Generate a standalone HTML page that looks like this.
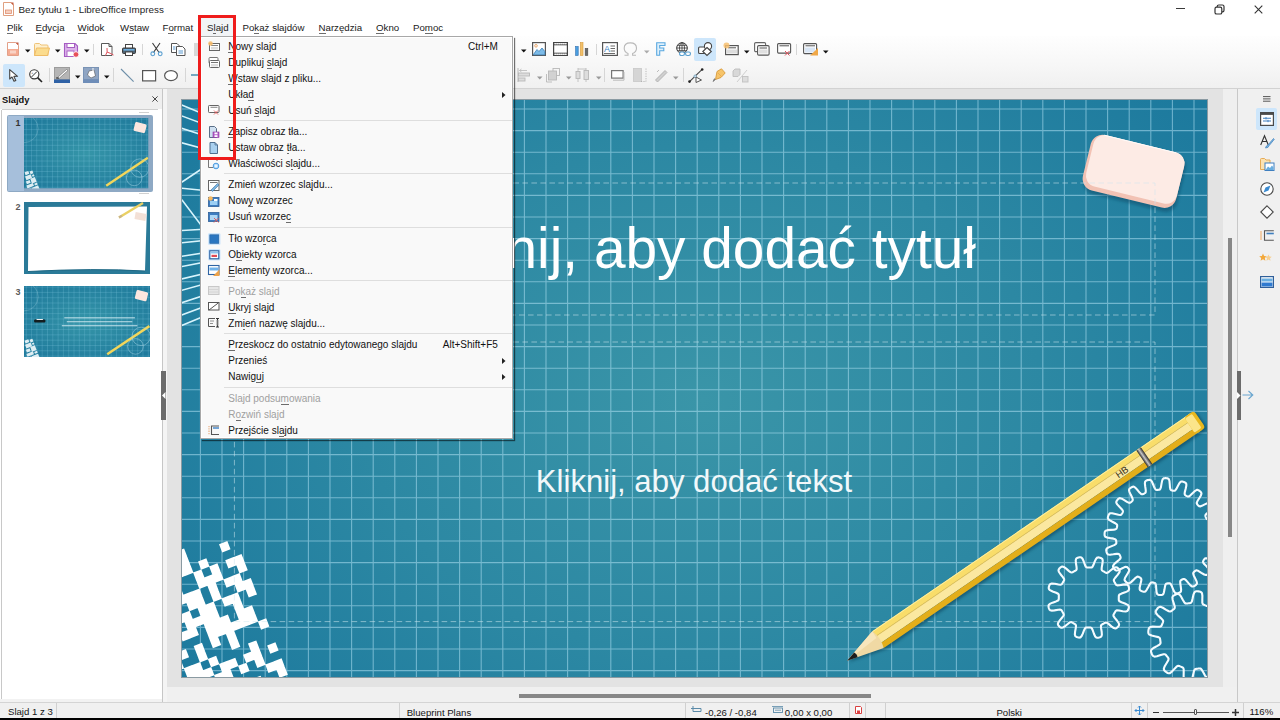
<!DOCTYPE html>
<html><head><meta charset="utf-8"><style>
html,body{margin:0;padding:0;width:1280px;height:720px;overflow:hidden;background:#fff;position:relative}
body{font-family:"Liberation Sans", sans-serif}
.t{position:absolute;white-space:nowrap;line-height:1}
u{text-decoration:none;border-bottom:1px solid rgba(60,60,60,0.75);}
svg{display:block}
</style></head><body>
<div style="position:absolute;left:0px;top:0px;width:1280px;height:36px;background:#fff"></div>
<svg style="position:absolute;left:3px;top:2px;overflow:visible" width="11" height="14" viewBox="0 0 11 14"><path d="M0.5 0.5 H8 L10.5 3 V13.5 H0.5 Z" fill="#fff" stroke="#e0a080" stroke-width="1"/><path d="M7.5 0.5 L10.5 3.5 V0.5Z" fill="#c35a3c"/><rect x="2.5" y="8" width="6" height="3.5" fill="#f6d0c0" stroke="#e09070" stroke-width="0.8"/></svg>
<div class="t" style="left:18.50px;top:5.06px;font-size:9.85px;color:#262626;font-weight:normal;">Bez tytułu 1 - LibreOffice Impress</div>
<div style="position:absolute;left:1176px;top:8px;width:9px;height:1.3px;background:#3a3a3a"></div>
<svg style="position:absolute;left:1214px;top:4px;overflow:visible" width="11" height="11" viewBox="0 0 11 11"><rect x="1" y="3.2" width="6.8" height="6.8" rx="1.6" fill="none" stroke="#333" stroke-width="1.2"/><path d="M3.2 3 V2.6 Q3.2 1 4.8 1 H8.4 Q10 1 10 2.6 V6.2 Q10 7.8 8.4 7.8 H8" fill="none" stroke="#333" stroke-width="1.2"/></svg>
<svg style="position:absolute;left:1254px;top:5px;overflow:visible" width="9" height="9" viewBox="0 0 9 9"><path d="M0.7 0.7 L8.3 8.3 M8.3 0.7 L0.7 8.3" stroke="#333" stroke-width="1.1"/></svg>
<div style="position:absolute;left:201px;top:18px;width:32px;height:18px;background:#f2f4f6"></div>
<div class="t" style="left:7.00px;top:23.29px;font-size:9.7px;color:#202020;font-weight:normal;"><u>P</u>lik</div>
<div class="t" style="left:35.50px;top:23.29px;font-size:9.7px;color:#202020;font-weight:normal;"><u>E</u>dycja</div>
<div class="t" style="left:77.50px;top:23.29px;font-size:9.7px;color:#202020;font-weight:normal;"><u>W</u>idok</div>
<div class="t" style="left:120.00px;top:23.29px;font-size:9.7px;color:#202020;font-weight:normal;">W<u>s</u>taw</div>
<div class="t" style="left:162.50px;top:23.29px;font-size:9.7px;color:#202020;font-weight:normal;">F<u>o</u>rmat</div>
<div class="t" style="left:207.00px;top:23.29px;font-size:9.7px;color:#202020;font-weight:normal;">S<u>l</u>ajd</div>
<div class="t" style="left:242.50px;top:23.29px;font-size:9.7px;color:#202020;font-weight:normal;">Po<u>k</u>aż slajdów</div>
<div class="t" style="left:318.50px;top:23.29px;font-size:9.7px;color:#202020;font-weight:normal;"><u>N</u>arzędzia</div>
<div class="t" style="left:376.00px;top:23.29px;font-size:9.7px;color:#202020;font-weight:normal;"><u>O</u>kno</div>
<div class="t" style="left:413.00px;top:23.29px;font-size:9.7px;color:#202020;font-weight:normal;">Po<u>m</u>oc</div>
<div style="position:absolute;left:0px;top:36px;width:1280px;height:52px;background:linear-gradient(#fefefe,#f7f7f7 55%,#f0f0f0)"></div>
<div style="position:absolute;left:0px;top:88px;width:1280px;height:1px;background:#d2d2d2"></div>
<svg style="position:absolute;left:7px;top:42px;overflow:visible" width="12" height="14" viewBox="0 0 12 14"><path d="M0.5 0.5 H8.5 L11.5 3.5 V13.5 H0.5Z" fill="#fff" stroke="#e3a088" stroke-width="1"/><rect x="1" y="7" width="10" height="6" fill="#f5ab92"/><path d="M8.5 0.5 L11.5 3.5 V0.5Z" fill="#c25b45"/><rect x="3" y="8.5" width="6" height="3" fill="#f9d3c5"/></svg>
<svg style="position:absolute;left:25px;top:49.3px;overflow:visible" width="6" height="4" viewBox="0 0 6 4"><path d="M0 0.5 H5.5 L2.75 3.5Z" fill="#111"/></svg>
<svg style="position:absolute;left:34px;top:43px;overflow:visible" width="16" height="13" viewBox="0 0 16 13"><path d="M0.5 1.5 Q0.5 0.5 1.5 0.5 H5.5 L7 2 H13 Q14 2 14 3 V12.5 H0.5Z" fill="#fdf0cf" stroke="#efc276" stroke-width="1"/><path d="M0.5 12.5 L2.5 5 H15.5 L13.5 12.5Z" fill="#fbdc8e" stroke="#efbc66" stroke-width="1"/></svg>
<svg style="position:absolute;left:54.5px;top:49.3px;overflow:visible" width="6" height="4" viewBox="0 0 6 4"><path d="M0 0.5 H5.5 L2.75 3.5Z" fill="#111"/></svg>
<svg style="position:absolute;left:64px;top:43px;overflow:visible" width="15" height="14" viewBox="0 0 15 14"><path d="M0.5 0.5 H11 L13.5 3 V13.5 H0.5Z" fill="#dcb3ea" stroke="#a55cc2" stroke-width="1.1"/><rect x="3" y="0.5" width="7.5" height="4" fill="#fff" stroke="#a55cc2" stroke-width="1"/><rect x="3" y="8" width="7" height="5.5" fill="#fff" stroke="#a55cc2" stroke-width="0.9"/><circle cx="12" cy="11.5" r="2.8" fill="#e8505a" stroke="#fff" stroke-width="0.8"/></svg>
<svg style="position:absolute;left:84px;top:49.3px;overflow:visible" width="6" height="4" viewBox="0 0 6 4"><path d="M0 0.5 H5.5 L2.75 3.5Z" fill="#111"/></svg>
<div style="position:absolute;left:93px;top:43.5px;width:1px;height:11.5px;background:#d6d6d6"></div>
<svg style="position:absolute;left:101px;top:43px;overflow:visible" width="13" height="13" viewBox="0 0 13 13"><path d="M0.5 0.5 H8 L11 3.5 V12.5 H0.5Z" fill="#fff" stroke="#5a5a5a" stroke-width="1"/><path d="M8 0.5 V3.5 H11" fill="none" stroke="#5a5a5a" stroke-width="1"/><path d="M6 5 Q7 9 4.5 12.5 M6 9 Q9 10 12.5 12" fill="none" stroke="#e0505a" stroke-width="1"/></svg>
<svg style="position:absolute;left:122px;top:44px;overflow:visible" width="14" height="12" viewBox="0 0 14 12"><rect x="3.5" y="0.5" width="7" height="4" fill="#fff" stroke="#444" stroke-width="1"/><rect x="0.5" y="4" width="13" height="5.5" rx="1" fill="#4f6373" stroke="#3a3a3a" stroke-width="1"/><rect x="1.5" y="5" width="11" height="1.6" fill="#6fb0e0"/><rect x="3.5" y="8" width="7" height="3.5" fill="#fff" stroke="#444" stroke-width="1"/></svg>
<div style="position:absolute;left:142px;top:43.5px;width:1px;height:11.5px;background:#d6d6d6"></div>
<svg style="position:absolute;left:150px;top:43px;overflow:visible" width="13" height="13" viewBox="0 0 13 13"><path d="M2.5 0 L9 9.5 M10 0 L3.5 9.5" stroke="#3a3a3a" stroke-width="1.1"/><circle cx="2.8" cy="10.8" r="1.9" fill="none" stroke="#5a9fd0" stroke-width="1.1"/><circle cx="10.2" cy="10.8" r="1.9" fill="none" stroke="#5a9fd0" stroke-width="1.1"/></svg>
<svg style="position:absolute;left:171px;top:43px;overflow:visible" width="15" height="13" viewBox="0 0 15 13"><path d="M0.5 0.5 H6 L8.5 3 V9.5 H0.5Z" fill="#fff" stroke="#555" stroke-width="1"/><path d="M5.5 3.5 H11.5 L14 6 V12.5 H5.5Z" fill="#fff" stroke="#555" stroke-width="1"/><path d="M7.5 8 H12 M7.5 10 H12" stroke="#5b9ad0" stroke-width="1"/><path d="M2 4 H4.5 M2 6 H4.5" stroke="#5b9ad0" stroke-width="1"/></svg>
<div style="position:absolute;left:194px;top:43px;width:6px;height:13px;background:#d8d8d8"></div>
<svg style="position:absolute;left:520.5px;top:49.3px;overflow:visible" width="6" height="4" viewBox="0 0 6 4"><path d="M0 0.5 H5.5 L2.75 3.5Z" fill="#111"/></svg>
<svg style="position:absolute;left:532px;top:42px;overflow:visible" width="14" height="14" viewBox="0 0 14 14"><rect x="0.6" y="0.6" width="12.8" height="12.8" fill="#fff" stroke="#555" stroke-width="1.2"/><path d="M1.2 12.8 L5 7.5 L7 9.5 L10 6 L12.8 9.5 V12.8Z" fill="#7cbbe8" stroke="#3a7fb8" stroke-width="0.8"/><circle cx="4" cy="3.8" r="1.3" fill="none" stroke="#e8a060" stroke-width="0.9"/></svg>
<svg style="position:absolute;left:553px;top:42px;overflow:visible" width="15" height="14" viewBox="0 0 15 14"><rect x="0.6" y="0.6" width="13.8" height="12.8" fill="#fff" stroke="#444" stroke-width="1.2"/><path d="M0.6 2.8 H14.4 M0.6 11.2 H14.4" stroke="#444" stroke-width="1"/><path d="M2 1.7 H13 M2 12.3 H13" stroke="#fff" stroke-width="0.8" stroke-dasharray="1 1"/></svg>
<svg style="position:absolute;left:575px;top:42px;overflow:visible" width="14" height="14" viewBox="0 0 14 14"><rect x="0.6" y="4.5" width="2.6" height="9" fill="#4a9ee0" stroke="#2f6fb0" stroke-width="0.6"/><rect x="5.4" y="0.6" width="2.6" height="12.9" fill="#f2c06a" stroke="#d89a3a" stroke-width="0.6"/><rect x="10.2" y="6.5" width="2.6" height="7" fill="#6b6b6b" stroke="#4a4a4a" stroke-width="0.6"/></svg>
<div style="position:absolute;left:595.5px;top:43.5px;width:1px;height:11.5px;background:#d6d6d6"></div>
<svg style="position:absolute;left:602px;top:42px;overflow:visible" width="16" height="14" viewBox="0 0 16 14"><rect x="0.6" y="0.6" width="14.8" height="12.8" fill="#fff" stroke="#555" stroke-width="1.2"/><text x="2" y="9.5" font-family="Liberation Sans" font-size="9" fill="#3b7fc0">A</text><path d="M8.5 4 H13 M8.5 6.5 H13 M8.5 9 H13 M2 11.5 H13" stroke="#5a5a5a" stroke-width="0.9"/></svg>
<svg style="position:absolute;left:623px;top:42px;overflow:visible" width="15" height="14" viewBox="0 0 15 14"><path d="M1.5 13.3 H5 V11.5 Q1.2 9.8 1.2 6.2 Q1.2 0.9 7.3 0.9 Q13.5 0.9 13.5 6.2 Q13.5 9.8 9.6 11.5 V13.3 H13" fill="none" stroke="#b9b9b9" stroke-width="1.1"/></svg>
<svg style="position:absolute;left:643.5px;top:49.5px;overflow:visible" width="6" height="4" viewBox="0 0 6 4"><path d="M0 0.5 H5.5 L2.75 3.5Z" fill="#aaa"/></svg>
<svg style="position:absolute;left:656px;top:42px;overflow:visible" width="10" height="14" viewBox="0 0 10 14"><path d="M0.7 0.7 H9 V3.5 H3.7 V6 H7.8 V8.8 H3.7 V13.3 H0.7Z" fill="#dff0fb" stroke="#5aa8e0" stroke-width="1.1"/></svg>
<svg style="position:absolute;left:676px;top:42px;overflow:visible" width="16" height="15" viewBox="0 0 16 15"><circle cx="6" cy="6" r="5.3" fill="#fff" stroke="#333" stroke-width="1"/><path d="M0.7 6 H11.3 M6 0.7 V11.3 M1.8 3.3 H10.2 M1.8 8.7 H10.2" stroke="#333" stroke-width="0.8"/><ellipse cx="6" cy="6" rx="2.5" ry="5.3" fill="none" stroke="#333" stroke-width="0.8"/><rect x="3.5" y="10" width="5" height="3.5" rx="1.7" fill="#fff" stroke="#5aa0d0" stroke-width="1.1"/><rect x="9.5" y="10" width="5" height="3.5" rx="1.7" fill="none" stroke="#5aa0d0" stroke-width="1.1"/></svg>
<div style="position:absolute;left:694px;top:38px;width:22px;height:22.5px;background:#cde6fb;border-radius:2px"></div>
<svg style="position:absolute;left:698px;top:42px;overflow:visible" width="15" height="14" viewBox="0 0 15 14"><rect x="0.6" y="5" width="7.5" height="6.5" rx="1" fill="#fff" stroke="#444" stroke-width="1.1"/><circle cx="10" cy="4.2" r="3.6" fill="#fff" stroke="#444" stroke-width="1.1"/><path d="M9 5.5 L13.3 9.5 L9 13.5 L4.8 9.5Z" fill="#fff" stroke="#444" stroke-width="1.1"/></svg>
<svg style="position:absolute;left:723px;top:42px;overflow:visible" width="16" height="13" viewBox="0 0 16 13"><rect x="2.6" y="3.6" width="12.6" height="9" fill="#fff" stroke="#555" stroke-width="1.2"/><path d="M5 5.8 H13" stroke="#555" stroke-width="1"/><rect x="4" y="7.5" width="10" height="4" fill="#ddd"/><circle cx="3.5" cy="3.5" r="3" fill="#f7c070" opacity="0.85"/></svg>
<svg style="position:absolute;left:743.5px;top:49.5px;overflow:visible" width="6" height="4" viewBox="0 0 6 4"><path d="M0 0.5 H5.5 L2.75 3.5Z" fill="#111"/></svg>
<svg style="position:absolute;left:754px;top:42px;overflow:visible" width="16" height="14" viewBox="0 0 16 14"><rect x="0.6" y="0.6" width="11" height="9" rx="1.2" fill="#fff" stroke="#666" stroke-width="1.1"/><rect x="3.6" y="3.6" width="11.5" height="9.5" rx="1.2" fill="#fff" stroke="#555" stroke-width="1.1"/><path d="M5.5 6 H13" stroke="#555" stroke-width="1"/><rect x="5" y="7.5" width="8.5" height="4" fill="#e0e0e0"/></svg>
<svg style="position:absolute;left:776.5px;top:43px;overflow:visible" width="15" height="13" viewBox="0 0 15 13"><rect x="0.6" y="0.6" width="13" height="9.5" rx="1" fill="#fff" stroke="#555" stroke-width="1.1"/><path d="M2.5 2.8 H12" stroke="#555" stroke-width="1"/><path d="M8 8 L12.5 12.5 M12.5 8 L8 12.5" stroke="#e0505a" stroke-width="1"/></svg>
<div style="position:absolute;left:796px;top:43.5px;width:1px;height:11.5px;background:#d6d6d6"></div>
<svg style="position:absolute;left:802.5px;top:43px;overflow:visible" width="16" height="13" viewBox="0 0 16 13"><rect x="0.6" y="0.6" width="13" height="10" rx="1" fill="#fff" stroke="#555" stroke-width="1.1"/><path d="M2.5 2.8 H12" stroke="#555" stroke-width="1"/><rect x="2" y="4.5" width="10" height="5" fill="#d9e6f5"/><path d="M15 5 V12.5 H7Z" fill="#f0a848"/></svg>
<svg style="position:absolute;left:823px;top:49.5px;overflow:visible" width="6" height="4" viewBox="0 0 6 4"><path d="M0 0.5 H5.5 L2.75 3.5Z" fill="#111"/></svg>
<div style="position:absolute;left:3px;top:64px;width:21.5px;height:22.5px;background:#cde6fb;border-radius:2px"></div>
<svg style="position:absolute;left:9px;top:68.5px;overflow:visible" width="10" height="13" viewBox="0 0 10 13"><path d="M0.7 0.7 L0.7 10 L3 8 L5 12.3 L6.8 11.4 L4.9 7.4 L8.6 7.3Z" fill="#fff" stroke="#444" stroke-width="1.1" stroke-linejoin="round"/></svg>
<svg style="position:absolute;left:29px;top:68.5px;overflow:visible" width="14" height="14" viewBox="0 0 14 14"><circle cx="5.3" cy="5.3" r="4.6" fill="#fff" stroke="#333" stroke-width="1.1"/><path d="M2.5 8 L8 2.5" stroke="#333" stroke-width="1"/><path d="M8.6 8.6 L13 13" stroke="#222" stroke-width="1.6"/><text x="2.3" y="5" font-size="3.5" fill="#333" font-family="Liberation Sans">+</text></svg>
<div style="position:absolute;left:48.5px;top:68px;width:1px;height:14px;background:#d6d6d6"></div>
<svg style="position:absolute;left:54px;top:67px;overflow:visible" width="16" height="16" viewBox="0 0 16 16"><rect x="0" y="0" width="16" height="13" fill="#9c9c9c"/><rect x="1" y="1" width="14" height="11" fill="#b5b5b5"/><path d="M3 11 L12.5 2.5 L14 3.5 L5 11.5Z" fill="#fff" stroke="#555" stroke-width="0.5"/><path d="M2 11 H5" stroke="#333" stroke-width="1"/><rect x="0" y="12.5" width="16" height="3.5" fill="#2f62a6"/></svg>
<svg style="position:absolute;left:75px;top:75px;overflow:visible" width="6" height="4" viewBox="0 0 6 4"><path d="M0 0.5 H5.5 L2.75 3.5Z" fill="#111"/></svg>
<svg style="position:absolute;left:83px;top:67px;overflow:visible" width="16" height="16" viewBox="0 0 16 16"><rect x="0" y="0" width="16" height="16" fill="#7993b5"/><rect x="1" y="1" width="14" height="11" fill="#8fa5c3"/><path d="M6 4 L11 3 L12.5 9 L8 11 L4.5 8Z" fill="#fff" stroke="#555" stroke-width="0.6"/><path d="M10 1 V4" stroke="#fff" stroke-width="1"/><rect x="0" y="12.5" width="16" height="3.5" fill="#6e8db8"/></svg>
<svg style="position:absolute;left:104px;top:75.3px;overflow:visible" width="6" height="4" viewBox="0 0 6 4"><path d="M0 0.5 H5.5 L2.75 3.5Z" fill="#111"/></svg>
<div style="position:absolute;left:113px;top:68px;width:1px;height:14px;background:#d6d6d6"></div>
<svg style="position:absolute;left:120px;top:68px;overflow:visible" width="15" height="15" viewBox="0 0 15 15"><path d="M1 1 L13.6 13.6" stroke="#6d8ea8" stroke-width="1.1"/></svg>
<svg style="position:absolute;left:142px;top:69.5px;overflow:visible" width="15" height="12" viewBox="0 0 15 12"><rect x="0.6" y="0.6" width="13" height="10.3" fill="#fff" stroke="#555" stroke-width="1.2"/></svg>
<svg style="position:absolute;left:164px;top:69.5px;overflow:visible" width="15" height="12" viewBox="0 0 15 12"><ellipse cx="7" cy="5.6" rx="6.4" ry="5" fill="#fff" stroke="#555" stroke-width="1.2"/></svg>
<div style="position:absolute;left:184.5px;top:68px;width:1px;height:14px;background:#d6d6d6"></div>
<div style="position:absolute;left:190.5px;top:74px;width:10px;height:1.5px;background:#74a8c0"></div>
<svg style="position:absolute;left:517px;top:67px;overflow:visible" width="14" height="16" viewBox="0 0 14 16"><path d="M1 1 V15" stroke="#b8b8b8" stroke-width="1"/><path d="M4.5 2 L2.5 3.5 L4.5 5 M2.5 3.5 H10" stroke="#b8b8b8" stroke-width="0.8" fill="none"/><rect x="1.5" y="6" width="11" height="3" fill="#ddd" stroke="#b8b8b8" stroke-width="0.9"/><rect x="1.5" y="11" width="6.5" height="3" fill="#ddd" stroke="#b8b8b8" stroke-width="0.9"/></svg>
<svg style="position:absolute;left:537px;top:76.3px;overflow:visible" width="6" height="4" viewBox="0 0 6 4"><path d="M0 0.5 H5.5 L2.75 3.5Z" fill="#999"/></svg>
<svg style="position:absolute;left:546px;top:68px;overflow:visible" width="14" height="15" viewBox="0 0 14 15"><rect x="7" y="0.5" width="6.5" height="7" fill="none" stroke="#b8b8b8" stroke-width="0.9"/><rect x="2.5" y="3" width="8" height="9" fill="#d2d2d2" stroke="#b8b8b8" stroke-width="0.9"/><path d="M0.5 6 V14 H6" fill="none" stroke="#b8b8b8" stroke-width="0.9"/></svg>
<svg style="position:absolute;left:566px;top:76.3px;overflow:visible" width="6" height="4" viewBox="0 0 6 4"><path d="M0 0.5 H5.5 L2.75 3.5Z" fill="#999"/></svg>
<svg style="position:absolute;left:575px;top:67px;overflow:visible" width="14" height="16" viewBox="0 0 14 16"><rect x="1" y="4.5" width="4" height="7" fill="#ddd" stroke="#b8b8b8" stroke-width="0.9"/><rect x="9" y="3.5" width="4.5" height="9" fill="#ddd" stroke="#b8b8b8" stroke-width="0.9"/><path d="M3 1 V4.5 M3 11.5 V15 M11 1 V3.5 M11 12.5 V15 M3 2 H11" stroke="#b8b8b8" stroke-width="0.8"/></svg>
<svg style="position:absolute;left:595.5px;top:76.3px;overflow:visible" width="6" height="4" viewBox="0 0 6 4"><path d="M0 0.5 H5.5 L2.75 3.5Z" fill="#999"/></svg>
<div style="position:absolute;left:603.5px;top:68px;width:1px;height:14px;background:#d6d6d6"></div>
<svg style="position:absolute;left:610.5px;top:69.5px;overflow:visible" width="14" height="11" viewBox="0 0 14 11"><rect x="0.6" y="0.6" width="11.5" height="7.5" fill="#fff" stroke="#777" stroke-width="1.2"/><path d="M2 10.2 H13 V2" stroke="#bbb" stroke-width="1" fill="none"/></svg>
<svg style="position:absolute;left:633px;top:68px;overflow:visible" width="14" height="14" viewBox="0 0 14 14"><rect x="0.5" y="0.5" width="8" height="13" fill="#d5d5d5" stroke="#c8c8c8" stroke-width="0.8"/><path d="M13 0.5 V13.5 H8" fill="none" stroke="#aaa" stroke-width="0.8" stroke-dasharray="1.2 1.2"/></svg>
<svg style="position:absolute;left:654px;top:68px;overflow:visible" width="14" height="14" viewBox="0 0 14 14"><path d="M1.5 12 L11 2.5 L13 4.5 L3.5 14Z" fill="#cfcfcf" stroke="#aaa" stroke-width="0.8"/><path d="M3 4 L5 2" stroke="#bbb" stroke-width="1"/></svg>
<svg style="position:absolute;left:673px;top:76.3px;overflow:visible" width="6" height="4" viewBox="0 0 6 4"><path d="M0 0.5 H5.5 L2.75 3.5Z" fill="#999"/></svg>
<div style="position:absolute;left:682.5px;top:68px;width:1px;height:14px;background:#d6d6d6"></div>
<svg style="position:absolute;left:688px;top:67.5px;overflow:visible" width="16" height="16" viewBox="0 0 16 16"><path d="M1.3 13.8 L14.4 1.2" stroke="#444" stroke-width="1.1"/><circle cx="1.5" cy="13.6" r="1.3" fill="#222"/><circle cx="14.2" cy="1.5" r="1.3" fill="#222"/><circle cx="7.2" cy="8.2" r="1.3" fill="#cfe3f0" stroke="#5b8fb0" stroke-width="0.6"/><path d="M8 9 L8 14.5 L13.5 12Z" fill="#fff" stroke="#555" stroke-width="1"/></svg>
<svg style="position:absolute;left:711.5px;top:68px;overflow:visible" width="14" height="14" viewBox="0 0 14 14"><path d="M5 3.5 L9.5 0.8 L13.2 5 L9 9.5 L3.5 11.5Z" fill="#f6c46a" stroke="#d89a3a" stroke-width="0.9"/><path d="M3.5 11.5 L1 13.5 L2.5 10.5" fill="#777" stroke="#777" stroke-width="0.8"/><path d="M6 5 L10 9" stroke="#e8a84a" stroke-width="0.8"/></svg>
<svg style="position:absolute;left:732px;top:68px;overflow:visible" width="18" height="15" viewBox="0 0 18 15"><path d="M1 3 L3 1 H8 V6.5 L6 8.5 H1Z" fill="#d8d8d8" stroke="#bdbdbd" stroke-width="0.9"/><path d="M5 14 L15 2" stroke="#cfcfcf" stroke-width="1"/><rect x="10.5" y="8.5" width="5.5" height="5.5" fill="#ddd" stroke="#c2c2c2" stroke-width="0.9"/></svg>
<div style="position:absolute;left:0px;top:89px;width:162px;height:614px;background:#fff"></div>
<div style="position:absolute;left:0px;top:699px;width:162px;height:3px;background:#f2f2f2"></div>
<div style="position:absolute;left:0px;top:89px;width:162px;height:20px;background:#efefef"></div>
<div style="position:absolute;left:2px;top:109px;width:156px;height:1px;background:#cfcfcf"></div>
<div style="position:absolute;left:1px;top:110px;width:1px;height:589px;background:#c8c8c8"></div>
<div style="position:absolute;left:162px;top:89px;width:1px;height:614px;background:#c6c6c6"></div>
<div style="position:absolute;left:163px;top:89px;width:4px;height:614px;background:#f4f4f4"></div>
<div class="t" style="left:2.00px;top:95.73px;font-size:9.3px;color:#111;font-weight:bold;">Slajdy</div>
<svg style="position:absolute;left:152px;top:96px;overflow:visible" width="6" height="6" viewBox="0 0 6 6"><path d="M0.4 0.4 L5.6 5.6 M5.6 0.4 L0.4 5.6" stroke="#333" stroke-width="0.9"/></svg>
<div style="position:absolute;left:139px;top:112px;width:10px;height:1px;background:#d0d0d0"></div>
<div style="position:absolute;left:139px;top:193px;width:10px;height:1px;background:#d0d0d0"></div>
<div style="position:absolute;left:7px;top:115px;width:146px;height:77px;background:#8ea9c4;border-radius:2px"></div>
<div style="position:absolute;left:8px;top:116px;width:16px;height:75px;background:#a6bfdb"></div>
<div class="t" style="left:15.60px;top:119.38px;font-size:9px;color:#333;font-weight:bold;">1</div>
<svg style="position:absolute;left:24px;top:118px;overflow:visible" width="124.5" height="70.5" viewBox="0 0 124.5 70.5"><defs><clipPath id="cl118"><rect width="124.5" height="70.5"/></clipPath></defs><g clip-path="url(#cl118)"><defs><radialGradient id="tg118" cx="0.5" cy="0.5" r="0.65"><stop offset="0" stop-color="#3595a8"/><stop offset="1" stop-color="#1f7a9c"/></radialGradient></defs>
<rect width="124.5" height="70.5" fill="url(#tg118)"/><path d="M2.24 0 V70.5" stroke="#8fd6ec" stroke-opacity="0.35" stroke-width="0.6"/><path d="M7.48 0 V70.5" stroke="#8fd6ec" stroke-opacity="0.35" stroke-width="0.6"/><path d="M12.73 0 V70.5" stroke="#8fd6ec" stroke-opacity="0.35" stroke-width="0.6"/><path d="M17.97 0 V70.5" stroke="#8fd6ec" stroke-opacity="0.35" stroke-width="0.6"/><path d="M23.21 0 V70.5" stroke="#8fd6ec" stroke-opacity="0.35" stroke-width="0.6"/><path d="M28.45 0 V70.5" stroke="#8fd6ec" stroke-opacity="0.35" stroke-width="0.6"/><path d="M33.69 0 V70.5" stroke="#8fd6ec" stroke-opacity="0.35" stroke-width="0.6"/><path d="M38.94 0 V70.5" stroke="#8fd6ec" stroke-opacity="0.35" stroke-width="0.6"/><path d="M44.18 0 V70.5" stroke="#8fd6ec" stroke-opacity="0.35" stroke-width="0.6"/><path d="M49.42 0 V70.5" stroke="#8fd6ec" stroke-opacity="0.35" stroke-width="0.6"/><path d="M54.66 0 V70.5" stroke="#8fd6ec" stroke-opacity="0.35" stroke-width="0.6"/><path d="M59.90 0 V70.5" stroke="#8fd6ec" stroke-opacity="0.35" stroke-width="0.6"/><path d="M65.15 0 V70.5" stroke="#8fd6ec" stroke-opacity="0.35" stroke-width="0.6"/><path d="M70.39 0 V70.5" stroke="#8fd6ec" stroke-opacity="0.35" stroke-width="0.6"/><path d="M75.63 0 V70.5" stroke="#8fd6ec" stroke-opacity="0.35" stroke-width="0.6"/><path d="M80.87 0 V70.5" stroke="#8fd6ec" stroke-opacity="0.35" stroke-width="0.6"/><path d="M86.11 0 V70.5" stroke="#8fd6ec" stroke-opacity="0.35" stroke-width="0.6"/><path d="M91.36 0 V70.5" stroke="#8fd6ec" stroke-opacity="0.35" stroke-width="0.6"/><path d="M96.60 0 V70.5" stroke="#8fd6ec" stroke-opacity="0.35" stroke-width="0.6"/><path d="M101.84 0 V70.5" stroke="#8fd6ec" stroke-opacity="0.35" stroke-width="0.6"/><path d="M107.08 0 V70.5" stroke="#8fd6ec" stroke-opacity="0.35" stroke-width="0.6"/><path d="M112.33 0 V70.5" stroke="#8fd6ec" stroke-opacity="0.35" stroke-width="0.6"/><path d="M117.57 0 V70.5" stroke="#8fd6ec" stroke-opacity="0.35" stroke-width="0.6"/><path d="M122.81 0 V70.5" stroke="#8fd6ec" stroke-opacity="0.35" stroke-width="0.6"/><path d="M0 1.10 H124.5" stroke="#8fd6ec" stroke-opacity="0.35" stroke-width="0.6"/><path d="M0 6.34 H124.5" stroke="#8fd6ec" stroke-opacity="0.35" stroke-width="0.6"/><path d="M0 11.58 H124.5" stroke="#8fd6ec" stroke-opacity="0.35" stroke-width="0.6"/><path d="M0 16.83 H124.5" stroke="#8fd6ec" stroke-opacity="0.35" stroke-width="0.6"/><path d="M0 22.07 H124.5" stroke="#8fd6ec" stroke-opacity="0.35" stroke-width="0.6"/><path d="M0 27.31 H124.5" stroke="#8fd6ec" stroke-opacity="0.35" stroke-width="0.6"/><path d="M0 32.55 H124.5" stroke="#8fd6ec" stroke-opacity="0.35" stroke-width="0.6"/><path d="M0 37.79 H124.5" stroke="#8fd6ec" stroke-opacity="0.35" stroke-width="0.6"/><path d="M0 43.04 H124.5" stroke="#8fd6ec" stroke-opacity="0.35" stroke-width="0.6"/><path d="M0 48.28 H124.5" stroke="#8fd6ec" stroke-opacity="0.35" stroke-width="0.6"/><path d="M0 53.52 H124.5" stroke="#8fd6ec" stroke-opacity="0.35" stroke-width="0.6"/><path d="M0 58.76 H124.5" stroke="#8fd6ec" stroke-opacity="0.35" stroke-width="0.6"/><path d="M0 64.01 H124.5" stroke="#8fd6ec" stroke-opacity="0.35" stroke-width="0.6"/><path d="M0 69.25 H124.5" stroke="#8fd6ec" stroke-opacity="0.35" stroke-width="0.6"/>
<rect x="110.2" y="4.9" width="11.8" height="9.2" rx="1.5" fill="#fbe6df" transform="rotate(14 115.8 9.5)"/>
<path d="M82.2 67.7 L123.9 39.8" stroke="#f3d65a" stroke-width="2.4"/>
<g fill="#eef7fa" opacity="0.92" transform="translate(8 51.5) rotate(-21)"><rect x="-8" y="0" width="4" height="3"/><rect x="-3" y="1" width="3" height="3"/><rect x="-9" y="4" width="6" height="4"/><rect x="-2" y="5" width="2" height="2"/><rect x="-10" y="9" width="4" height="3"/><rect x="-5" y="8" width="5" height="5"/><rect x="-11" y="13" width="7" height="3"/><rect x="-3" y="14" width="3" height="2"/><rect x="-12" y="17" width="4" height="3"/><rect x="-7" y="17" width="7" height="4"/><rect x="-13" y="21" width="13" height="3"/></g>
<circle cx="110.2" cy="59.9" r="7.8" fill="none" stroke="#a9d7e6" stroke-opacity="0.7" stroke-width="0.7"/>
<circle cx="115.8" cy="50.1" r="9.2" fill="none" stroke="#a9d7e6" stroke-opacity="0.7" stroke-width="0.7"/>
<circle cx="0.0" cy="10.6" r="14.1" fill="none" stroke="#9fd0e0" stroke-opacity="0.45" stroke-width="0.7"/>
</g></svg>
<div class="t" style="left:15.60px;top:203.38px;font-size:9px;color:#5a5a5a;font-weight:bold;">2</div>
<svg style="position:absolute;left:24px;top:202px;overflow:visible" width="126" height="72" viewBox="0 0 126 72"><rect width="126" height="72" fill="#2a7a98"/><path d="M4.5 5 L123 4.5 L121 69 Q70 66 4 69.5Z" fill="#fff"/><path d="M4 69.5 Q70 66 121 69" stroke="#1f6884" stroke-width="1" fill="none"/><rect x="111" y="11" width="11" height="7" fill="#f3e0d6" transform="rotate(10 116.5 14.5)"/><path d="M95 15.5 L119 1" stroke="#ead063" stroke-width="2.4"/><path d="M95 15.5 L98 13.6" stroke="#c9b58a" stroke-width="2.2"/></svg>
<div class="t" style="left:15.60px;top:287.88px;font-size:9px;color:#5a5a5a;font-weight:bold;">3</div>
<svg style="position:absolute;left:24px;top:286.3px;overflow:visible" width="126" height="71" viewBox="0 0 126 71"><defs><clipPath id="cl286"><rect width="126" height="71"/></clipPath></defs><g clip-path="url(#cl286)"><defs><radialGradient id="tg286" cx="0.5" cy="0.5" r="0.65"><stop offset="0" stop-color="#3595a8"/><stop offset="1" stop-color="#1f7a9c"/></radialGradient></defs>
<rect width="126" height="71" fill="url(#tg286)"/><path d="M2.27 0 V71" stroke="#8fd6ec" stroke-opacity="0.35" stroke-width="0.6"/><path d="M7.57 0 V71" stroke="#8fd6ec" stroke-opacity="0.35" stroke-width="0.6"/><path d="M12.88 0 V71" stroke="#8fd6ec" stroke-opacity="0.35" stroke-width="0.6"/><path d="M18.18 0 V71" stroke="#8fd6ec" stroke-opacity="0.35" stroke-width="0.6"/><path d="M23.49 0 V71" stroke="#8fd6ec" stroke-opacity="0.35" stroke-width="0.6"/><path d="M28.79 0 V71" stroke="#8fd6ec" stroke-opacity="0.35" stroke-width="0.6"/><path d="M34.10 0 V71" stroke="#8fd6ec" stroke-opacity="0.35" stroke-width="0.6"/><path d="M39.40 0 V71" stroke="#8fd6ec" stroke-opacity="0.35" stroke-width="0.6"/><path d="M44.71 0 V71" stroke="#8fd6ec" stroke-opacity="0.35" stroke-width="0.6"/><path d="M50.02 0 V71" stroke="#8fd6ec" stroke-opacity="0.35" stroke-width="0.6"/><path d="M55.32 0 V71" stroke="#8fd6ec" stroke-opacity="0.35" stroke-width="0.6"/><path d="M60.63 0 V71" stroke="#8fd6ec" stroke-opacity="0.35" stroke-width="0.6"/><path d="M65.93 0 V71" stroke="#8fd6ec" stroke-opacity="0.35" stroke-width="0.6"/><path d="M71.24 0 V71" stroke="#8fd6ec" stroke-opacity="0.35" stroke-width="0.6"/><path d="M76.54 0 V71" stroke="#8fd6ec" stroke-opacity="0.35" stroke-width="0.6"/><path d="M81.85 0 V71" stroke="#8fd6ec" stroke-opacity="0.35" stroke-width="0.6"/><path d="M87.15 0 V71" stroke="#8fd6ec" stroke-opacity="0.35" stroke-width="0.6"/><path d="M92.46 0 V71" stroke="#8fd6ec" stroke-opacity="0.35" stroke-width="0.6"/><path d="M97.76 0 V71" stroke="#8fd6ec" stroke-opacity="0.35" stroke-width="0.6"/><path d="M103.07 0 V71" stroke="#8fd6ec" stroke-opacity="0.35" stroke-width="0.6"/><path d="M108.37 0 V71" stroke="#8fd6ec" stroke-opacity="0.35" stroke-width="0.6"/><path d="M113.68 0 V71" stroke="#8fd6ec" stroke-opacity="0.35" stroke-width="0.6"/><path d="M118.98 0 V71" stroke="#8fd6ec" stroke-opacity="0.35" stroke-width="0.6"/><path d="M124.29 0 V71" stroke="#8fd6ec" stroke-opacity="0.35" stroke-width="0.6"/><path d="M0 1.11 H126" stroke="#8fd6ec" stroke-opacity="0.35" stroke-width="0.6"/><path d="M0 6.41 H126" stroke="#8fd6ec" stroke-opacity="0.35" stroke-width="0.6"/><path d="M0 11.72 H126" stroke="#8fd6ec" stroke-opacity="0.35" stroke-width="0.6"/><path d="M0 17.02 H126" stroke="#8fd6ec" stroke-opacity="0.35" stroke-width="0.6"/><path d="M0 22.33 H126" stroke="#8fd6ec" stroke-opacity="0.35" stroke-width="0.6"/><path d="M0 27.63 H126" stroke="#8fd6ec" stroke-opacity="0.35" stroke-width="0.6"/><path d="M0 32.94 H126" stroke="#8fd6ec" stroke-opacity="0.35" stroke-width="0.6"/><path d="M0 38.24 H126" stroke="#8fd6ec" stroke-opacity="0.35" stroke-width="0.6"/><path d="M0 43.55 H126" stroke="#8fd6ec" stroke-opacity="0.35" stroke-width="0.6"/><path d="M0 48.85 H126" stroke="#8fd6ec" stroke-opacity="0.35" stroke-width="0.6"/><path d="M0 54.16 H126" stroke="#8fd6ec" stroke-opacity="0.35" stroke-width="0.6"/><path d="M0 59.47 H126" stroke="#8fd6ec" stroke-opacity="0.35" stroke-width="0.6"/><path d="M0 64.77 H126" stroke="#8fd6ec" stroke-opacity="0.35" stroke-width="0.6"/><path d="M0 70.08 H126" stroke="#8fd6ec" stroke-opacity="0.35" stroke-width="0.6"/>
<rect x="111.5" y="5.0" width="12.0" height="9.2" rx="1.5" fill="#fbe6df" transform="rotate(14 117.2 9.6)"/>
<path d="M83.2 68.2 L125.4 40.1" stroke="#f3d65a" stroke-width="2.4"/>
<g fill="#eef7fa" opacity="0.92" transform="translate(8 51.8) rotate(-21)"><rect x="-8" y="0" width="4" height="3"/><rect x="-3" y="1" width="3" height="3"/><rect x="-9" y="4" width="6" height="4"/><rect x="-2" y="5" width="2" height="2"/><rect x="-10" y="9" width="4" height="3"/><rect x="-5" y="8" width="5" height="5"/><rect x="-11" y="13" width="7" height="3"/><rect x="-3" y="14" width="3" height="2"/><rect x="-12" y="17" width="4" height="3"/><rect x="-7" y="17" width="7" height="4"/><rect x="-13" y="21" width="13" height="3"/></g>
<circle cx="111.5" cy="60.4" r="7.8" fill="none" stroke="#a9d7e6" stroke-opacity="0.7" stroke-width="0.7"/>
<circle cx="117.2" cy="50.4" r="9.2" fill="none" stroke="#a9d7e6" stroke-opacity="0.7" stroke-width="0.7"/>
<circle cx="0.0" cy="10.7" r="14.2" fill="none" stroke="#9fd0e0" stroke-opacity="0.45" stroke-width="0.7"/>
<rect x="40.3" y="31.2" width="70.6" height="1.2" fill="#d5ecf3" opacity="0.75"/><rect x="42.8" y="35.1" width="65.5" height="1.2" fill="#d5ecf3" opacity="0.75"/><rect x="37.8" y="39.1" width="75.6" height="1.2" fill="#d5ecf3" opacity="0.75"/><rect x="10.1" y="33.4" width="11.3" height="3" rx="1" fill="#111" opacity="0.9"/><rect x="12.6" y="33.0" width="6.3" height="1" fill="#eee"/></g></svg>
<div style="position:absolute;left:161px;top:371px;width:5px;height:49px;background:#6b6b6b"></div>
<svg style="position:absolute;left:161.5px;top:392px;overflow:visible" width="4" height="7" viewBox="0 0 4 7"><path d="M3.5 0 V7 L0 3.5Z" fill="#fff"/></svg>
<div style="position:absolute;left:167px;top:89px;width:1056px;height:598px;background:#e3e3e3"></div>
<div style="position:absolute;left:167px;top:687px;width:1070px;height:16px;background:#f0f0f0"></div>
<div style="position:absolute;left:1223px;top:89px;width:14px;height:598px;background:#efefef"></div>
<div style="position:absolute;left:181px;top:99px;width:1027px;height:579px;background:#8a9aa2"></div>
<div style="position:absolute;left:518.5px;top:694px;width:352.5px;height:3.8px;background:#878787"></div>
<div style="position:absolute;left:1227.8px;top:238px;width:4.4px;height:299px;background:#878787"></div>
<div style="position:absolute;left:1236.5px;top:89px;width:1px;height:614px;background:#c8c8c8"></div>
<div style="position:absolute;left:1237.5px;top:89px;width:42.5px;height:614px;background:#f0f0f0"></div>
<div style="position:absolute;left:1237px;top:371px;width:4px;height:49px;background:#6b6b6b"></div>
<svg style="position:absolute;left:1237.2px;top:392px;overflow:visible" width="3.5" height="7" viewBox="0 0 3.5 7"><path d="M0 0 V7 L3.5 3.5Z" fill="#fff"/></svg>
<svg style="position:absolute;left:1242px;top:389.5px;overflow:visible" width="12" height="10" viewBox="0 0 12 10"><path d="M0.5 5 H10.5 M6.5 1 L10.8 5 L6.5 9" fill="none" stroke="#6aa6cf" stroke-width="1.1"/></svg>
<svg style="position:absolute;left:1263px;top:96px;overflow:visible" width="8" height="6" viewBox="0 0 8 6"><path d="M0 0.6 H7.5 M0 2.9 H7.5 M0 5.2 H7.5" stroke="#444" stroke-width="0.9"/></svg>
<div style="position:absolute;left:1255.5px;top:107.5px;width:21.5px;height:22.3px;background:#cde6fb;border-radius:2px"></div>
<svg style="position:absolute;left:1260px;top:112px;overflow:visible" width="14" height="14" viewBox="0 0 14 14"><rect x="0.6" y="0.6" width="12.8" height="12.8" fill="#fff" stroke="#4a4a4a" stroke-width="1.2"/><rect x="0.6" y="0.6" width="12.8" height="2.3" fill="#4a4a4a"/><path d="M3 6.3 H11 M3 9 H11" stroke="#3f7fbf" stroke-width="1.1"/><path d="M6 5 V7.5 M8 7.8 V10.2" stroke="#3f7fbf" stroke-width="0.9"/></svg>
<svg style="position:absolute;left:1259.5px;top:135px;overflow:visible" width="15" height="14" viewBox="0 0 15 14"><path d="M0.7 10 L4.5 0.8 L8.3 10 M2.3 6.5 H6.8" fill="none" stroke="#333" stroke-width="1.1"/><path d="M5.5 13 Q6 10.5 8 10 L13.5 3.5 L14.3 4.3 L9 10.8 Q8.5 13 5.5 13Z" fill="#7ab5e0" stroke="#3e7fbf" stroke-width="0.7"/></svg>
<svg style="position:absolute;left:1259.5px;top:158px;overflow:visible" width="15" height="13" viewBox="0 0 15 13"><path d="M0.5 1.5 Q0.5 0.5 1.5 0.5 H4.5 L6 2 H10 V11.5 H0.5Z" fill="#fbe2b3" stroke="#e6ab55" stroke-width="1"/><rect x="5" y="5" width="9" height="7.5" fill="#fff" stroke="#3f7fbf" stroke-width="1"/><path d="M5.5 12 L8 8.5 L10 10 L12 7.5 L13.5 9.5 V12Z" fill="#6aaee0"/></svg>
<svg style="position:absolute;left:1259.5px;top:181.5px;overflow:visible" width="14" height="14" viewBox="0 0 14 14"><circle cx="7" cy="7" r="6.2" fill="#fff" stroke="#4a4a4a" stroke-width="1.1"/><path d="M3.5 10.5 L5.5 5.5 L10.5 3.5 L8.5 8.5Z" fill="#3a8ad0"/></svg>
<svg style="position:absolute;left:1259.5px;top:205px;overflow:visible" width="14" height="14" viewBox="0 0 14 14"><path d="M7 0.8 L13.2 7 L7 13.2 L0.8 7Z" fill="#fff" stroke="#4a4a4a" stroke-width="1.1"/></svg>
<svg style="position:absolute;left:1259.5px;top:229.5px;overflow:visible" width="15" height="11" viewBox="0 0 15 11"><path d="M1 1 V10" stroke="#f0c8a0" stroke-width="1.8"/><path d="M13.8 0.8 H4.5 V10.3 H13.8" fill="none" stroke="#555" stroke-width="1.1"/><path d="M6.5 3.5 H13.8" stroke="#3f7fbf" stroke-width="1.6"/></svg>
<svg style="position:absolute;left:1259px;top:253px;overflow:visible" width="15" height="10" viewBox="0 0 15 10"><path d="M4 0.5 L5.1 3 L7.8 3.2 L5.8 5 L6.4 7.7 L4 6.3 L1.6 7.7 L2.2 5 L0.2 3.2 L2.9 3Z" fill="#f3a83a"/><path d="M9.5 1.5 L10.5 3.6 L12.8 3.8 L11 5.3 L11.5 7.7 L9.5 6.5 L7.5 7.7 L8 5.3 L6.2 3.8 L8.5 3.6Z" fill="#f7cf90"/></svg>
<svg style="position:absolute;left:1260px;top:276px;overflow:visible" width="14" height="12" viewBox="0 0 14 12"><rect x="0.6" y="0.6" width="12.8" height="10.8" fill="#fff" stroke="#2f5f9a" stroke-width="1.2"/><rect x="1.5" y="2.5" width="11" height="3" fill="#6aaee0"/><rect x="1.5" y="6.5" width="11" height="4" fill="#2f7ad0"/></svg>
<div style="position:absolute;left:0px;top:702px;width:1280px;height:1px;background:#d4d4d4"></div>
<div style="position:absolute;left:0px;top:703px;width:1280px;height:15px;background:#f0f0f0"></div>
<div style="position:absolute;left:0px;top:718px;width:1280px;height:2px;background:#000"></div>
<div style="position:absolute;left:56px;top:703px;width:1px;height:15px;background:#d0d0d0"></div>
<div style="position:absolute;left:399px;top:703px;width:1px;height:15px;background:#d0d0d0"></div>
<div style="position:absolute;left:685.3px;top:703px;width:1px;height:15px;background:#d0d0d0"></div>
<div style="position:absolute;left:848.5px;top:703px;width:1px;height:15px;background:#d0d0d0"></div>
<div style="position:absolute;left:864.5px;top:703px;width:1px;height:15px;background:#d0d0d0"></div>
<div style="position:absolute;left:885px;top:703px;width:1px;height:15px;background:#d0d0d0"></div>
<div style="position:absolute;left:1130.8px;top:703px;width:1px;height:15px;background:#d0d0d0"></div>
<div style="position:absolute;left:1146.5px;top:703px;width:1px;height:15px;background:#d0d0d0"></div>
<div style="position:absolute;left:1242.5px;top:703px;width:1px;height:15px;background:#d0d0d0"></div>
<div class="t" style="left:8.00px;top:707.47px;font-size:9.6px;color:#151515;font-weight:normal;">Slajd 1 z 3</div>
<div class="t" style="left:406.70px;top:707.77px;font-size:9.6px;color:#151515;font-weight:normal;">Blueprint Plans</div>
<svg style="position:absolute;left:691px;top:706px;overflow:visible" width="11" height="8" viewBox="0 0 11 8"><path d="M2 0 V5.5 H10 V2.5 H2 M0 2.5 H2" fill="none" stroke="#5a8aa8" stroke-width="1"/></svg>
<div class="t" style="left:705.00px;top:707.77px;font-size:9.6px;color:#151515;font-weight:normal;">-0,26 / -0,84</div>
<svg style="position:absolute;left:771.5px;top:706px;overflow:visible" width="11" height="8" viewBox="0 0 11 8"><rect x="1.5" y="2" width="9" height="4.5" fill="none" stroke="#5a8aa8" stroke-width="0.9"/><path d="M0 0.5 H11 M3 4.2 H9" stroke="#5a8aa8" stroke-width="0.8"/></svg>
<div class="t" style="left:784.80px;top:707.77px;font-size:9.6px;color:#151515;font-weight:normal;">0,00 x 0,00</div>
<svg style="position:absolute;left:855px;top:706px;overflow:visible" width="7" height="8" viewBox="0 0 7 8"><path d="M0.5 0.5 H5.5 L6.5 1.5 V7.5 H0.5Z" fill="#fff" stroke="#d94040" stroke-width="1"/><rect x="2" y="4.5" width="3" height="3" fill="#d94040"/></svg>
<div class="t" style="left:996.40px;top:707.77px;font-size:9.6px;color:#151515;font-weight:normal;">Polski</div>
<svg style="position:absolute;left:1135px;top:706px;overflow:visible" width="9" height="9" viewBox="0 0 9 9"><path d="M4.5 0 V9 M0 4.5 H9" stroke="#3a8ad0" stroke-width="1"/><path d="M3 1.5 L4.5 0 L6 1.5 M3 7.5 L4.5 9 L6 7.5 M1.5 3 L0 4.5 L1.5 6 M7.5 3 L9 4.5 L7.5 6" fill="none" stroke="#3a8ad0" stroke-width="1"/></svg>
<div style="position:absolute;left:1152.8px;top:711.5px;width:6.6px;height:1.5px;background:#333"></div>
<div style="position:absolute;left:1163px;top:712px;width:65.5px;height:1px;background:#555"></div>
<div style="position:absolute;left:1193.8px;top:709px;width:2.8px;height:6px;background:#f6f6f6;border:0.8px solid #555;box-sizing:border-box;border-radius:1px"></div>
<svg style="position:absolute;left:1232px;top:709px;overflow:visible" width="7" height="7" viewBox="0 0 7 7"><path d="M3.5 0 V7 M0 3.5 H7" stroke="#333" stroke-width="1.5"/></svg>
<div class="t" style="left:1249.40px;top:707.37px;font-size:9.6px;color:#151515;font-weight:normal;">116%</div>
<svg style="position:absolute;left:182px;top:100px;overflow:visible" width="1025" height="577" viewBox="0 0 1025 577"><defs>
<radialGradient id="bg" gradientUnits="userSpaceOnUse" cx="520" cy="300" r="620" gradientTransform="translate(520 300) scale(1 0.75) translate(-520 -300)">
<stop offset="0" stop-color="#3a95a8"/><stop offset="0.55" stop-color="#2c88a3"/><stop offset="1" stop-color="#1d7a9e"/></radialGradient>
<clipPath id="sc"><rect width="1025" height="577"/></clipPath>
<linearGradient id="fer" x1="0" y1="0" x2="1" y2="0"><stop offset="0" stop-color="#2a2a2a"/><stop offset="0.45" stop-color="#c8c8c8"/><stop offset="1" stop-color="#2a2a2a"/></linearGradient>
<filter id="blur2" x="-20%" y="-20%" width="140%" height="140%"><feGaussianBlur stdDeviation="1.6"/></filter>
</defs>
<g clip-path="url(#sc)">
<rect width="1025" height="577" fill="url(#bg)"/>
<path d="M18.40 0V577 M40.00 0V577 M61.60 0V577 M83.20 0V577 M104.80 0V577 M126.40 0V577 M148.00 0V577 M169.60 0V577 M191.20 0V577 M212.80 0V577 M234.40 0V577 M256.00 0V577 M277.60 0V577 M299.20 0V577 M320.80 0V577 M342.40 0V577 M364.00 0V577 M385.60 0V577 M407.20 0V577 M428.80 0V577 M450.40 0V577 M472.00 0V577 M493.60 0V577 M515.20 0V577 M536.80 0V577 M558.40 0V577 M580.00 0V577 M601.60 0V577 M623.20 0V577 M644.80 0V577 M666.40 0V577 M688.00 0V577 M709.60 0V577 M731.20 0V577 M752.80 0V577 M774.40 0V577 M796.00 0V577 M817.60 0V577 M839.20 0V577 M860.80 0V577 M882.40 0V577 M904.00 0V577 M925.60 0V577 M947.20 0V577 M968.80 0V577 M990.40 0V577 M1012.00 0V577 M0 9.00H1025 M0 30.60H1025 M0 52.20H1025 M0 73.80H1025 M0 95.40H1025 M0 117.00H1025 M0 138.60H1025 M0 160.20H1025 M0 181.80H1025 M0 203.40H1025 M0 225.00H1025 M0 246.60H1025 M0 268.20H1025 M0 289.80H1025 M0 311.40H1025 M0 333.00H1025 M0 354.60H1025 M0 376.20H1025 M0 397.80H1025 M0 419.40H1025 M0 441.00H1025 M0 462.60H1025 M0 484.20H1025 M0 505.80H1025 M0 527.40H1025 M0 549.00H1025 M0 570.60H1025" stroke="#c4efff" stroke-opacity="0.48" stroke-width="1.1" fill="none"/>
<path d="M-1.3 4.7 L45.0 23.7 M-1.4 15.5 L45.5 32.9 M-1.5 27.9 L46.1 43.3 M-1.7 42.4 L46.6 55.4 M-2.0 88.0 L47.8 93.0 M-2.0 130.6 L47.9 127.7 M-1.9 143.0 L47.8 137.9 M-1.9 156.5 L47.5 148.9 M-1.8 166.9 L47.3 157.4 M-1.7 179.3 L46.9 167.7 M-1.6 190.7 L46.5 177.2 M-1.5 203.1 L46.0 187.6 M-1.4 215.5 L45.5 198.0 M-1.2 225.8 L45.0 206.8 M0 82 L30 62 M0 100 L25 133" stroke="#d8f4fc" stroke-width="1.6" fill="none" stroke-linecap="round"/>
<g transform="translate(50 430) rotate(-21)"><path d="M-60.2 0.0h8.9v8.9h-8.9z M-94.6 0.0h8.9v8.9h-8.9z M-103.2 0.0h8.9v8.9h-8.9z M-111.8 0.0h8.9v8.9h-8.9z M-17.2 8.6h8.9v8.9h-8.9z M-60.2 8.6h8.9v8.9h-8.9z M-68.8 8.6h8.9v8.9h-8.9z M-86.0 8.6h8.9v8.9h-8.9z M-94.6 8.6h8.9v8.9h-8.9z M-103.2 8.6h8.9v8.9h-8.9z M-111.8 8.6h8.9v8.9h-8.9z M-43.0 17.2h8.9v8.9h-8.9z M-60.2 17.2h8.9v8.9h-8.9z M-68.8 17.2h8.9v8.9h-8.9z M-111.8 17.2h8.9v8.9h-8.9z M-120.4 17.2h8.9v8.9h-8.9z M-8.6 25.8h8.9v8.9h-8.9z M-17.2 25.8h8.9v8.9h-8.9z M-34.4 25.8h8.9v8.9h-8.9z M-51.6 25.8h8.9v8.9h-8.9z M-77.4 25.8h8.9v8.9h-8.9z M-86.0 25.8h8.9v8.9h-8.9z M-103.2 25.8h8.9v8.9h-8.9z M-120.4 25.8h8.9v8.9h-8.9z M-8.6 34.4h8.9v8.9h-8.9z M-34.4 34.4h8.9v8.9h-8.9z M-43.0 34.4h8.9v8.9h-8.9z M-51.6 34.4h8.9v8.9h-8.9z M-77.4 34.4h8.9v8.9h-8.9z M-86.0 34.4h8.9v8.9h-8.9z M-94.6 34.4h8.9v8.9h-8.9z M-103.2 34.4h8.9v8.9h-8.9z M-120.4 34.4h8.9v8.9h-8.9z M-17.2 43.0h8.9v8.9h-8.9z M-25.8 43.0h8.9v8.9h-8.9z M-43.0 43.0h8.9v8.9h-8.9z M-60.2 43.0h8.9v8.9h-8.9z M-68.8 43.0h8.9v8.9h-8.9z M-77.4 43.0h8.9v8.9h-8.9z M-86.0 43.0h8.9v8.9h-8.9z M-111.8 43.0h8.9v8.9h-8.9z M-8.6 51.6h8.9v8.9h-8.9z M-17.2 51.6h8.9v8.9h-8.9z M-43.0 51.6h8.9v8.9h-8.9z M-60.2 51.6h8.9v8.9h-8.9z M-68.8 51.6h8.9v8.9h-8.9z M-86.0 51.6h8.9v8.9h-8.9z M-94.6 51.6h8.9v8.9h-8.9z M-103.2 51.6h8.9v8.9h-8.9z M-111.8 51.6h8.9v8.9h-8.9z M-120.4 51.6h8.9v8.9h-8.9z M-8.6 60.2h8.9v8.9h-8.9z M-25.8 60.2h8.9v8.9h-8.9z M-34.4 60.2h8.9v8.9h-8.9z M-51.6 60.2h8.9v8.9h-8.9z M-60.2 60.2h8.9v8.9h-8.9z M-77.4 60.2h8.9v8.9h-8.9z M-86.0 60.2h8.9v8.9h-8.9z M-111.8 60.2h8.9v8.9h-8.9z M-120.4 60.2h8.9v8.9h-8.9z M-25.8 68.8h8.9v8.9h-8.9z M-51.6 68.8h8.9v8.9h-8.9z M-60.2 68.8h8.9v8.9h-8.9z M-68.8 68.8h8.9v8.9h-8.9z M-77.4 68.8h8.9v8.9h-8.9z M-94.6 68.8h8.9v8.9h-8.9z M-111.8 68.8h8.9v8.9h-8.9z M-17.2 77.4h8.9v8.9h-8.9z M-25.8 77.4h8.9v8.9h-8.9z M-43.0 77.4h8.9v8.9h-8.9z M-51.6 77.4h8.9v8.9h-8.9z M-60.2 77.4h8.9v8.9h-8.9z M-77.4 77.4h8.9v8.9h-8.9z M-86.0 77.4h8.9v8.9h-8.9z M-103.2 77.4h8.9v8.9h-8.9z M-111.8 77.4h8.9v8.9h-8.9z M-120.4 77.4h8.9v8.9h-8.9z M-17.2 86.0h8.9v8.9h-8.9z M-25.8 86.0h8.9v8.9h-8.9z M-34.4 86.0h8.9v8.9h-8.9z M-43.0 86.0h8.9v8.9h-8.9z M-51.6 86.0h8.9v8.9h-8.9z M-60.2 86.0h8.9v8.9h-8.9z M-103.2 86.0h8.9v8.9h-8.9z M-111.8 86.0h8.9v8.9h-8.9z M-120.4 86.0h8.9v8.9h-8.9z M-8.6 94.6h8.9v8.9h-8.9z M-43.0 94.6h8.9v8.9h-8.9z M-60.2 94.6h8.9v8.9h-8.9z M-77.4 94.6h8.9v8.9h-8.9z M-94.6 94.6h8.9v8.9h-8.9z M-103.2 94.6h8.9v8.9h-8.9z M-43.0 103.2h8.9v8.9h-8.9z M-77.4 103.2h8.9v8.9h-8.9z M-103.2 103.2h8.9v8.9h-8.9z M-120.4 103.2h8.9v8.9h-8.9z M-25.8 111.8h8.9v8.9h-8.9z M-68.8 111.8h8.9v8.9h-8.9z M-86.0 111.8h8.9v8.9h-8.9z M-94.6 111.8h8.9v8.9h-8.9z M-111.8 111.8h8.9v8.9h-8.9z M-8.6 120.4h8.9v8.9h-8.9z M-25.8 120.4h8.9v8.9h-8.9z M-34.4 120.4h8.9v8.9h-8.9z M-51.6 120.4h8.9v8.9h-8.9z M-60.2 120.4h8.9v8.9h-8.9z M-77.4 120.4h8.9v8.9h-8.9z M-86.0 120.4h8.9v8.9h-8.9z M-94.6 120.4h8.9v8.9h-8.9z M-111.8 120.4h8.9v8.9h-8.9z M-120.4 120.4h8.9v8.9h-8.9z M-25.8 129.0h8.9v8.9h-8.9z M-43.0 129.0h8.9v8.9h-8.9z M-60.2 129.0h8.9v8.9h-8.9z M-68.8 129.0h8.9v8.9h-8.9z M-103.2 129.0h8.9v8.9h-8.9z M-111.8 129.0h8.9v8.9h-8.9z M-120.4 129.0h8.9v8.9h-8.9z M-8.6 137.6h8.9v8.9h-8.9z M-17.2 137.6h8.9v8.9h-8.9z M-60.2 137.6h8.9v8.9h-8.9z M-68.8 137.6h8.9v8.9h-8.9z M-77.4 137.6h8.9v8.9h-8.9z M-86.0 137.6h8.9v8.9h-8.9z M-94.6 137.6h8.9v8.9h-8.9z M-103.2 137.6h8.9v8.9h-8.9z M-120.4 137.6h8.9v8.9h-8.9z M-8.6 146.2h8.9v8.9h-8.9z M-34.4 146.2h8.9v8.9h-8.9z M-43.0 146.2h8.9v8.9h-8.9z M-51.6 146.2h8.9v8.9h-8.9z M-68.8 146.2h8.9v8.9h-8.9z M-86.0 146.2h8.9v8.9h-8.9z M-94.6 146.2h8.9v8.9h-8.9z M-111.8 146.2h8.9v8.9h-8.9z M-120.4 146.2h8.9v8.9h-8.9z M-17.2 154.8h8.9v8.9h-8.9z M-34.4 154.8h8.9v8.9h-8.9z M-43.0 154.8h8.9v8.9h-8.9z M-51.6 154.8h8.9v8.9h-8.9z M-68.8 154.8h8.9v8.9h-8.9z M-120.4 154.8h8.9v8.9h-8.9z M-17.2 163.4h8.9v8.9h-8.9z M-25.8 163.4h8.9v8.9h-8.9z M-34.4 163.4h8.9v8.9h-8.9z M-51.6 163.4h8.9v8.9h-8.9z M-60.2 163.4h8.9v8.9h-8.9z M-68.8 163.4h8.9v8.9h-8.9z M-86.0 163.4h8.9v8.9h-8.9z M-94.6 163.4h8.9v8.9h-8.9z M-111.8 163.4h8.9v8.9h-8.9z M-17.2 172.0h8.9v8.9h-8.9z M-43.0 172.0h8.9v8.9h-8.9z M-51.6 172.0h8.9v8.9h-8.9z M-77.4 172.0h8.9v8.9h-8.9z M-86.0 172.0h8.9v8.9h-8.9z M-120.4 172.0h8.9v8.9h-8.9z" fill="#fff"/></g>
<text x="513" y="168.3" text-anchor="middle" font-family="Liberation Sans" font-size="56.8" fill="#fff">Kliknij, aby dodać tytuł</text>
<text x="512" y="391.8" text-anchor="middle" font-family="Liberation Sans" font-size="31.1" fill="#f2f8fa">Kliknij, aby dodać tekst</text>
<path d="M1039.43 439.52 L1039.37 440.29 L1039.25 441.05 L1038.98 441.79 L1038.32 442.49 L1036.60 443.05 L1033.31 443.36 L1030.03 443.59 L1028.31 443.98 L1027.62 444.50 L1027.32 445.07 L1027.13 445.66 L1027.00 446.26 L1026.88 446.87 L1026.81 447.48 L1026.86 448.13 L1027.27 448.88 L1028.70 449.93 L1031.61 451.46 L1034.50 453.07 L1035.84 454.28 L1036.17 455.18 L1036.11 455.97 L1035.92 456.71 L1035.66 457.44 L1035.37 458.14 L1035.02 458.83 L1034.54 459.45 L1033.70 459.91 L1031.89 459.92 L1028.66 459.20 L1025.47 458.40 L1023.71 458.23 L1022.90 458.52 L1022.43 458.97 L1022.08 459.48 L1021.76 460.00 L1021.46 460.54 L1021.20 461.11 L1021.05 461.74 L1021.21 462.58 L1022.24 464.02 L1024.54 466.38 L1026.79 468.80 L1027.70 470.36 L1027.73 471.32 L1027.43 472.05 L1027.01 472.70 L1026.55 473.31 L1026.05 473.89 L1025.51 474.43 L1024.86 474.88 L1023.91 475.06 L1022.19 474.50 L1019.35 472.82 L1016.56 471.07 L1014.93 470.37 L1014.07 470.39 L1013.49 470.68 L1013.00 471.05 L1012.53 471.45 L1012.08 471.88 L1011.66 472.33 L1011.32 472.88 L1011.22 473.74 L1011.75 475.42 L1013.21 478.37 L1014.60 481.37 L1014.98 483.14 L1014.71 484.06 L1014.20 484.66 L1013.61 485.15 L1012.98 485.59 L1012.32 485.99 L1011.64 486.33 L1010.88 486.56 L1009.93 486.43 L1008.47 485.37 L1006.28 482.90 L1004.16 480.37 L1002.84 479.21 L1002.01 478.96 L1001.37 479.05 L1000.78 479.25 L1000.22 479.49 L999.66 479.75 L999.12 480.06 L998.63 480.48 L998.26 481.26 L998.25 483.02 L998.73 486.28 L999.12 489.56 L998.94 491.36 L998.39 492.16 L997.72 492.57 L997.01 492.85 L996.27 493.07 L995.53 493.25 L994.77 493.37 L993.98 493.35 L993.11 492.94 L992.05 491.47 L990.74 488.44 L989.50 485.39 L988.60 483.87 L987.90 483.38 L987.26 483.27 L986.64 483.28 L986.02 483.33 L985.41 483.41 L984.80 483.53 L984.20 483.78 L983.62 484.41 L983.06 486.08 L982.51 489.33 L981.86 492.57 L981.14 494.22 L980.38 494.81 L979.61 495.00 L978.84 495.04 L978.08 495.03 L977.31 494.97 L976.55 494.85 L975.81 494.58 L975.11 493.92 L974.55 492.20 L974.24 488.91 L974.01 485.63 L973.62 483.91 L973.10 483.22 L972.53 482.92 L971.94 482.73 L971.34 482.60 L970.73 482.48 L970.12 482.41 L969.47 482.46 L968.72 482.87 L967.67 484.30 L966.14 487.21 L964.53 490.10 L963.32 491.44 L962.42 491.77 L961.63 491.71 L960.89 491.52 L960.16 491.26 L959.46 490.97 L958.77 490.62 L958.15 490.14 L957.69 489.30 L957.68 487.49 L958.40 484.26 L959.20 481.07 L959.37 479.31 L959.08 478.50 L958.63 478.03 L958.12 477.68 L957.60 477.36 L957.06 477.06 L956.49 476.80 L955.86 476.65 L955.02 476.81 L953.58 477.84 L951.22 480.14 L948.80 482.39 L947.24 483.30 L946.28 483.33 L945.55 483.03 L944.90 482.61 L944.29 482.15 L943.71 481.65 L943.17 481.11 L942.72 480.46 L942.54 479.51 L943.10 477.79 L944.78 474.95 L946.53 472.16 L947.23 470.53 L947.21 469.67 L946.92 469.09 L946.55 468.60 L946.15 468.13 L945.72 467.68 L945.27 467.26 L944.72 466.92 L943.86 466.82 L942.18 467.35 L939.23 468.81 L936.23 470.20 L934.46 470.58 L933.54 470.31 L932.94 469.80 L932.45 469.21 L932.01 468.58 L931.61 467.92 L931.27 467.24 L931.04 466.48 L931.17 465.53 L932.23 464.07 L934.70 461.88 L937.23 459.76 L938.39 458.44 L938.64 457.61 L938.55 456.97 L938.35 456.38 L938.11 455.82 L937.85 455.26 L937.54 454.72 L937.12 454.23 L936.34 453.86 L934.58 453.85 L931.32 454.33 L928.04 454.72 L926.24 454.54 L925.44 453.99 L925.03 453.32 L924.75 452.61 L924.53 451.87 L924.35 451.13 L924.23 450.37 L924.25 449.58 L924.66 448.71 L926.13 447.65 L929.16 446.34 L932.21 445.10 L933.73 444.20 L934.22 443.50 L934.33 442.86 L934.32 442.24 L934.27 441.62 L934.19 441.01 L934.07 440.40 L933.82 439.80 L933.19 439.22 L931.52 438.66 L928.27 438.11 L925.03 437.46 L923.38 436.74 L922.79 435.98 L922.60 435.21 L922.56 434.44 L922.57 433.68 L922.63 432.91 L922.75 432.15 L923.02 431.41 L923.68 430.71 L925.40 430.15 L928.69 429.84 L931.97 429.61 L933.69 429.22 L934.38 428.70 L934.68 428.13 L934.87 427.54 L935.00 426.94 L935.12 426.33 L935.19 425.72 L935.14 425.07 L934.73 424.32 L933.30 423.27 L930.39 421.74 L927.50 420.13 L926.16 418.92 L925.83 418.02 L925.89 417.23 L926.08 416.49 L926.34 415.76 L926.63 415.06 L926.98 414.37 L927.46 413.75 L928.30 413.29 L930.11 413.28 L933.34 414.00 L936.53 414.80 L938.29 414.97 L939.10 414.68 L939.57 414.23 L939.92 413.72 L940.24 413.20 L940.54 412.66 L940.80 412.09 L940.95 411.46 L940.79 410.62 L939.76 409.18 L937.46 406.82 L935.21 404.40 L934.30 402.84 L934.27 401.88 L934.57 401.15 L934.99 400.50 L935.45 399.89 L935.95 399.31 L936.49 398.77 L937.14 398.32 L938.09 398.14 L939.81 398.70 L942.65 400.38 L945.44 402.13 L947.07 402.83 L947.93 402.81 L948.51 402.52 L949.00 402.15 L949.47 401.75 L949.92 401.32 L950.34 400.87 L950.68 400.32 L950.78 399.46 L950.25 397.78 L948.79 394.83 L947.40 391.83 L947.02 390.06 L947.29 389.14 L947.80 388.54 L948.39 388.05 L949.02 387.61 L949.68 387.21 L950.36 386.87 L951.12 386.64 L952.07 386.77 L953.53 387.83 L955.72 390.30 L957.84 392.83 L959.16 393.99 L959.99 394.24 L960.63 394.15 L961.22 393.95 L961.78 393.71 L962.34 393.45 L962.88 393.14 L963.37 392.72 L963.74 391.94 L963.75 390.18 L963.27 386.92 L962.88 383.64 L963.06 381.84 L963.61 381.04 L964.28 380.63 L964.99 380.35 L965.73 380.13 L966.47 379.95 L967.23 379.83 L968.02 379.85 L968.89 380.26 L969.95 381.73 L971.26 384.76 L972.50 387.81 L973.40 389.33 L974.10 389.82 L974.74 389.93 L975.36 389.92 L975.98 389.87 L976.59 389.79 L977.20 389.67 L977.80 389.42 L978.38 388.79 L978.94 387.12 L979.49 383.87 L980.14 380.63 L980.86 378.98 L981.62 378.39 L982.39 378.20 L983.16 378.16 L983.92 378.17 L984.69 378.23 L985.45 378.35 L986.19 378.62 L986.89 379.28 L987.45 381.00 L987.76 384.29 L987.99 387.57 L988.38 389.29 L988.90 389.98 L989.47 390.28 L990.06 390.47 L990.66 390.60 L991.27 390.72 L991.88 390.79 L992.53 390.74 L993.28 390.33 L994.33 388.90 L995.86 385.99 L997.47 383.10 L998.68 381.76 L999.58 381.43 L1000.37 381.49 L1001.11 381.68 L1001.84 381.94 L1002.54 382.23 L1003.23 382.58 L1003.85 383.06 L1004.31 383.90 L1004.32 385.71 L1003.60 388.94 L1002.80 392.13 L1002.63 393.89 L1002.92 394.70 L1003.37 395.17 L1003.88 395.52 L1004.40 395.84 L1004.94 396.14 L1005.51 396.40 L1006.14 396.55 L1006.98 396.39 L1008.42 395.36 L1010.78 393.06 L1013.20 390.81 L1014.76 389.90 L1015.72 389.87 L1016.45 390.17 L1017.10 390.59 L1017.71 391.05 L1018.29 391.55 L1018.83 392.09 L1019.28 392.74 L1019.46 393.69 L1018.90 395.41 L1017.22 398.25 L1015.47 401.04 L1014.77 402.67 L1014.79 403.53 L1015.08 404.11 L1015.45 404.60 L1015.85 405.07 L1016.28 405.52 L1016.73 405.94 L1017.28 406.28 L1018.14 406.38 L1019.82 405.85 L1022.77 404.39 L1025.77 403.00 L1027.54 402.62 L1028.46 402.89 L1029.06 403.40 L1029.55 403.99 L1029.99 404.62 L1030.39 405.28 L1030.73 405.96 L1030.96 406.72 L1030.83 407.67 L1029.77 409.13 L1027.30 411.32 L1024.77 413.44 L1023.61 414.76 L1023.36 415.59 L1023.45 416.23 L1023.65 416.82 L1023.89 417.38 L1024.15 417.94 L1024.46 418.48 L1024.88 418.97 L1025.66 419.34 L1027.42 419.35 L1030.68 418.87 L1033.96 418.48 L1035.76 418.66 L1036.56 419.21 L1036.97 419.88 L1037.25 420.59 L1037.47 421.33 L1037.65 422.07 L1037.77 422.83 L1037.75 423.62 L1037.34 424.49 L1035.87 425.55 L1032.84 426.86 L1029.79 428.10 L1028.27 429.00 L1027.78 429.70 L1027.67 430.34 L1027.68 430.96 L1027.73 431.58 L1027.81 432.19 L1027.93 432.80 L1028.18 433.40 L1028.81 433.98 L1030.48 434.54 L1033.73 435.09 L1036.97 435.74 L1038.62 436.46 L1039.21 437.22 L1039.40 437.99 L1039.44 438.76Z" fill="none" stroke="#f4fbff" stroke-width="2.1" stroke-linejoin="round"/>
<path d="M946.86 487.27 L947.04 488.16 L947.10 489.06 L946.86 490.02 L945.80 491.10 L943.06 492.36 L939.56 493.58 L937.60 494.49 L936.99 495.22 L936.84 495.89 L936.81 496.54 L936.80 497.20 L936.80 497.85 L936.79 498.51 L936.78 499.16 L936.79 499.82 L936.92 500.49 L937.52 501.23 L939.46 502.19 L942.93 503.50 L945.63 504.82 L946.67 505.92 L946.89 506.88 L946.81 507.79 L946.61 508.67 L946.32 509.53 L945.92 510.34 L945.23 511.05 L943.77 511.45 L940.78 511.18 L937.13 510.48 L934.98 510.30 L934.08 510.62 L933.62 511.12 L933.26 511.68 L932.93 512.24 L932.60 512.81 L932.27 513.37 L931.93 513.93 L931.61 514.51 L931.39 515.16 L931.54 516.09 L932.74 517.89 L935.09 520.76 L936.77 523.26 L937.12 524.73 L936.82 525.67 L936.30 526.42 L935.69 527.08 L935.01 527.68 L934.26 528.18 L933.31 528.45 L931.84 528.07 L929.39 526.33 L926.57 523.91 L924.81 522.67 L923.87 522.50 L923.22 522.71 L922.63 523.01 L922.06 523.33 L921.49 523.66 L920.92 523.97 L920.35 524.29 L919.78 524.63 L919.27 525.09 L918.93 525.97 L919.07 528.13 L919.67 531.79 L919.88 534.79 L919.44 536.24 L918.72 536.91 L917.89 537.29 L917.03 537.56 L916.14 537.74 L915.24 537.80 L914.28 537.56 L913.20 536.50 L911.94 533.76 L910.72 530.26 L909.81 528.30 L909.08 527.69 L908.41 527.54 L907.76 527.51 L907.10 527.50 L906.45 527.50 L905.79 527.49 L905.14 527.48 L904.48 527.49 L903.81 527.62 L903.07 528.22 L902.11 530.16 L900.80 533.63 L899.48 536.33 L898.38 537.37 L897.42 537.59 L896.51 537.51 L895.63 537.31 L894.77 537.02 L893.96 536.62 L893.25 535.93 L892.85 534.47 L893.12 531.48 L893.82 527.83 L894.00 525.68 L893.68 524.78 L893.18 524.32 L892.62 523.96 L892.06 523.63 L891.49 523.30 L890.93 522.97 L890.37 522.63 L889.79 522.31 L889.14 522.09 L888.21 522.24 L886.41 523.44 L883.54 525.79 L881.04 527.47 L879.57 527.82 L878.63 527.52 L877.88 527.00 L877.22 526.39 L876.62 525.71 L876.12 524.96 L875.85 524.01 L876.23 522.54 L877.97 520.09 L880.39 517.27 L881.63 515.51 L881.80 514.57 L881.59 513.92 L881.29 513.33 L880.97 512.76 L880.64 512.19 L880.33 511.62 L880.01 511.05 L879.67 510.48 L879.21 509.97 L878.33 509.63 L876.17 509.77 L872.51 510.37 L869.51 510.58 L868.06 510.14 L867.39 509.42 L867.01 508.59 L866.74 507.73 L866.56 506.84 L866.50 505.94 L866.74 504.98 L867.80 503.90 L870.54 502.64 L874.04 501.42 L876.00 500.51 L876.61 499.78 L876.76 499.11 L876.79 498.46 L876.80 497.80 L876.80 497.15 L876.81 496.49 L876.82 495.84 L876.81 495.18 L876.68 494.51 L876.08 493.77 L874.14 492.81 L870.67 491.50 L867.97 490.18 L866.93 489.08 L866.71 488.12 L866.79 487.21 L866.99 486.33 L867.28 485.47 L867.68 484.66 L868.37 483.95 L869.83 483.55 L872.82 483.82 L876.47 484.52 L878.62 484.70 L879.52 484.38 L879.98 483.88 L880.34 483.32 L880.67 482.76 L881.00 482.19 L881.33 481.63 L881.67 481.07 L881.99 480.49 L882.21 479.84 L882.06 478.91 L880.86 477.11 L878.51 474.24 L876.83 471.74 L876.48 470.27 L876.78 469.33 L877.30 468.58 L877.91 467.92 L878.59 467.32 L879.34 466.82 L880.29 466.55 L881.76 466.93 L884.21 468.67 L887.03 471.09 L888.79 472.33 L889.73 472.50 L890.38 472.29 L890.97 471.99 L891.54 471.67 L892.11 471.34 L892.68 471.03 L893.25 470.71 L893.82 470.37 L894.33 469.91 L894.67 469.03 L894.53 466.87 L893.93 463.21 L893.72 460.21 L894.16 458.76 L894.88 458.09 L895.71 457.71 L896.57 457.44 L897.46 457.26 L898.36 457.20 L899.32 457.44 L900.40 458.50 L901.66 461.24 L902.88 464.74 L903.79 466.70 L904.52 467.31 L905.19 467.46 L905.84 467.49 L906.50 467.50 L907.15 467.50 L907.81 467.51 L908.46 467.52 L909.12 467.51 L909.79 467.38 L910.53 466.78 L911.49 464.84 L912.80 461.37 L914.12 458.67 L915.22 457.63 L916.18 457.41 L917.09 457.49 L917.97 457.69 L918.83 457.98 L919.64 458.38 L920.35 459.07 L920.75 460.53 L920.48 463.52 L919.78 467.17 L919.60 469.32 L919.92 470.22 L920.42 470.68 L920.98 471.04 L921.54 471.37 L922.11 471.70 L922.67 472.03 L923.23 472.37 L923.81 472.69 L924.46 472.91 L925.39 472.76 L927.19 471.56 L930.06 469.21 L932.56 467.53 L934.03 467.18 L934.97 467.48 L935.72 468.00 L936.38 468.61 L936.98 469.29 L937.48 470.04 L937.75 470.99 L937.37 472.46 L935.63 474.91 L933.21 477.73 L931.97 479.49 L931.80 480.43 L932.01 481.08 L932.31 481.67 L932.63 482.24 L932.96 482.81 L933.27 483.38 L933.59 483.95 L933.93 484.52 L934.39 485.03 L935.27 485.37 L937.43 485.23 L941.09 484.63 L944.09 484.42 L945.54 484.86 L946.21 485.58 L946.59 486.41Z" fill="none" stroke="#f4fbff" stroke-width="2.1" stroke-linejoin="round"/>
<path d="M1055.61 541.38 L1055.46 542.35 L1055.22 543.30 L1054.78 544.21 L1053.76 544.99 L1051.28 545.39 L1047.29 545.30 L1044.30 545.31 L1043.03 545.72 L1042.50 546.31 L1042.17 546.96 L1041.89 547.63 L1041.62 548.30 L1041.36 548.96 L1041.09 549.64 L1040.88 550.33 L1040.86 551.13 L1041.50 552.30 L1043.65 554.38 L1046.59 557.07 L1048.11 559.08 L1048.31 560.34 L1047.99 561.31 L1047.50 562.16 L1046.94 562.96 L1046.33 563.73 L1045.65 564.43 L1044.81 565.00 L1043.54 565.17 L1041.19 564.27 L1037.78 562.20 L1035.18 560.72 L1033.88 560.43 L1033.12 560.68 L1032.51 561.08 L1031.94 561.52 L1031.37 561.96 L1030.81 562.40 L1030.24 562.86 L1029.71 563.35 L1029.29 564.03 L1029.26 565.37 L1030.08 568.24 L1031.29 572.04 L1031.60 574.54 L1031.14 575.74 L1030.38 576.41 L1029.53 576.90 L1028.64 577.32 L1027.73 577.67 L1026.79 577.95 L1025.78 578.02 L1024.59 577.53 L1023.01 575.58 L1021.09 572.08 L1019.58 569.50 L1018.60 568.60 L1017.82 568.43 L1017.09 568.47 L1016.38 568.57 L1015.66 568.67 L1014.95 568.77 L1014.24 568.88 L1013.53 569.04 L1012.82 569.42 L1012.13 570.56 L1011.41 573.46 L1010.55 577.36 L1009.57 579.67 L1008.57 580.48 L1007.58 580.69 L1006.60 580.69 L1005.62 580.61 L1004.65 580.46 L1003.70 580.22 L1002.79 579.78 L1002.01 578.76 L1001.61 576.28 L1001.70 572.29 L1001.69 569.30 L1001.28 568.03 L1000.69 567.50 L1000.04 567.17 L999.37 566.89 L998.70 566.62 L998.04 566.36 L997.36 566.09 L996.67 565.88 L995.87 565.86 L994.70 566.50 L992.62 568.65 L989.93 571.59 L987.92 573.11 L986.66 573.31 L985.69 572.99 L984.84 572.50 L984.04 571.94 L983.27 571.33 L982.57 570.65 L982.00 569.81 L981.83 568.54 L982.73 566.19 L984.80 562.78 L986.28 560.18 L986.57 558.88 L986.32 558.12 L985.92 557.51 L985.48 556.94 L985.04 556.37 L984.60 555.81 L984.14 555.24 L983.65 554.71 L982.97 554.29 L981.63 554.26 L978.76 555.08 L974.96 556.29 L972.46 556.60 L971.26 556.14 L970.59 555.38 L970.10 554.53 L969.68 553.64 L969.33 552.73 L969.05 551.79 L968.98 550.78 L969.47 549.59 L971.42 548.01 L974.92 546.09 L977.50 544.58 L978.40 543.60 L978.57 542.82 L978.53 542.09 L978.43 541.38 L978.33 540.66 L978.23 539.95 L978.12 539.24 L977.96 538.53 L977.58 537.82 L976.44 537.13 L973.54 536.41 L969.64 535.55 L967.33 534.57 L966.52 533.57 L966.31 532.58 L966.31 531.60 L966.39 530.62 L966.54 529.65 L966.78 528.70 L967.22 527.79 L968.24 527.01 L970.72 526.61 L974.71 526.70 L977.70 526.69 L978.97 526.28 L979.50 525.69 L979.83 525.04 L980.11 524.37 L980.38 523.70 L980.64 523.04 L980.91 522.36 L981.12 521.67 L981.14 520.87 L980.50 519.70 L978.35 517.62 L975.41 514.93 L973.89 512.92 L973.69 511.66 L974.01 510.69 L974.50 509.84 L975.06 509.04 L975.67 508.27 L976.35 507.57 L977.19 507.00 L978.46 506.83 L980.81 507.73 L984.22 509.80 L986.82 511.28 L988.12 511.57 L988.88 511.32 L989.49 510.92 L990.06 510.48 L990.63 510.04 L991.19 509.60 L991.76 509.14 L992.29 508.65 L992.71 507.97 L992.74 506.63 L991.92 503.76 L990.71 499.96 L990.40 497.46 L990.86 496.26 L991.62 495.59 L992.47 495.10 L993.36 494.68 L994.27 494.33 L995.21 494.05 L996.22 493.98 L997.41 494.47 L998.99 496.42 L1000.91 499.92 L1002.42 502.50 L1003.40 503.40 L1004.18 503.57 L1004.91 503.53 L1005.62 503.43 L1006.34 503.33 L1007.05 503.23 L1007.76 503.12 L1008.47 502.96 L1009.18 502.58 L1009.87 501.44 L1010.59 498.54 L1011.45 494.64 L1012.43 492.33 L1013.43 491.52 L1014.42 491.31 L1015.40 491.31 L1016.38 491.39 L1017.35 491.54 L1018.30 491.78 L1019.21 492.22 L1019.99 493.24 L1020.39 495.72 L1020.30 499.71 L1020.31 502.70 L1020.72 503.97 L1021.31 504.50 L1021.96 504.83 L1022.63 505.11 L1023.30 505.38 L1023.96 505.64 L1024.64 505.91 L1025.33 506.12 L1026.13 506.14 L1027.30 505.50 L1029.38 503.35 L1032.07 500.41 L1034.08 498.89 L1035.34 498.69 L1036.31 499.01 L1037.16 499.50 L1037.96 500.06 L1038.73 500.67 L1039.43 501.35 L1040.00 502.19 L1040.17 503.46 L1039.27 505.81 L1037.20 509.22 L1035.72 511.82 L1035.43 513.12 L1035.68 513.88 L1036.08 514.49 L1036.52 515.06 L1036.96 515.63 L1037.40 516.19 L1037.86 516.76 L1038.35 517.29 L1039.03 517.71 L1040.37 517.74 L1043.24 516.92 L1047.04 515.71 L1049.54 515.40 L1050.74 515.86 L1051.41 516.62 L1051.90 517.47 L1052.32 518.36 L1052.67 519.27 L1052.95 520.21 L1053.02 521.22 L1052.53 522.41 L1050.58 523.99 L1047.08 525.91 L1044.50 527.42 L1043.60 528.40 L1043.43 529.18 L1043.47 529.91 L1043.57 530.62 L1043.67 531.34 L1043.77 532.05 L1043.88 532.76 L1044.04 533.47 L1044.42 534.18 L1045.56 534.87 L1048.46 535.59 L1052.36 536.45 L1054.67 537.43 L1055.48 538.43 L1055.69 539.42 L1055.69 540.40Z" fill="none" stroke="#f4fbff" stroke-width="2.1" stroke-linejoin="round"/>
<g transform="translate(951.5 71.30000000000001) rotate(13.8)"><rect x="-46" y="-26" width="96" height="58" rx="12" fill="#0d4a66" opacity="0.5" filter="url(#blur2)"/><rect x="-48" y="-28.5" width="96" height="57" rx="12" fill="#f2c2b4"/><rect x="-45.5" y="-28.5" width="93.5" height="52.5" rx="11" fill="#fdebe5"/><path d="M-37 -28.1 H37" stroke="#fff" stroke-width="0.9" opacity="0.9"/></g>
<g fill="none" stroke="#cfe8ef" stroke-opacity="0.55" stroke-width="1" stroke-dasharray="5.6 3.4"><rect x="52.4" y="83" width="920.6" height="132"/><rect x="52.4" y="242" width="920.6" height="279.6"/></g>
<g transform="translate(690.3 531.2) rotate(-34.4)"><path d="M-37.5 10 L0 0 H390 V20.5 H0Z" fill="#062c40" opacity="0.45" transform="translate(1.2 2.2)" filter="url(#blur2)"/><rect x="0" y="0" width="386" height="6.2" fill="#f9dd6a"/><rect x="0" y="0" width="386" height="0.9" fill="#fff0a0"/><rect x="0" y="6.2" width="386" height="8.3" fill="#fbe8a0"/><rect x="0" y="5.8" width="386" height="0.8" fill="#e6c050" opacity="0.8"/><rect x="0" y="14.5" width="386" height="5.8" fill="#e3ae1a"/><rect x="320" y="0" width="5.5" height="20.3" fill="url(#fer)"/><rect x="378" y="-0.3" width="12" height="20.6" rx="3.5" fill="#e8b81e"/><rect x="378" y="1.2" width="8.5" height="17" rx="1.5" fill="#fbe58a"/><path d="M0 0 Q3.5 10 0 20.3 L-37.5 10.2Z" fill="#f0d9a4"/><path d="M0 0 L-37.5 10.2 L-0.5 8Z" fill="#f7e6bc"/><path d="M-37.5 10.2 L-27 7.3 Q-25.3 10.4 -27 13.2Z" fill="#1e1e1e"/><text x="296" y="13" text-anchor="middle" font-family="Liberation Sans" font-size="9.5" fill="#3a3320">HB</text></g>
</g></svg>
<div style="position:absolute;left:201px;top:37px;width:313px;height:403px;background:rgba(0,0,0,0.0);box-shadow:1px 1px 1px rgba(0,0,0,0.55)"></div>
<div style="position:absolute;left:200px;top:36px;width:313px;height:403px;background:#f9f9f9;border:1px solid #a8a8a8;box-sizing:border-box"></div>
<div style="position:absolute;left:201px;top:37px;width:311px;height:401px;border:1px solid #fff;box-sizing:border-box"></div>
<svg style="position:absolute;left:207.5px;top:41.0px;overflow:visible" width="13" height="12" viewBox="0 0 13 12"><rect x="1.5" y="2.5" width="10" height="7" fill="#fff" stroke="#666" stroke-width="1"/><path d="M3 4.5 H10" stroke="#666" stroke-width="0.8"/><rect x="3" y="6" width="7" height="2.5" fill="#ddd"/><circle cx="2.5" cy="2.5" r="2.3" fill="#f6bb6a" opacity="0.9"/></svg>
<div class="t" style="left:228.30px;top:41.53px;font-size:10px;color:#111;font-weight:normal;"><u>N</u>owy slajd</div>
<div class="t" style="left:468.08px;top:41.53px;font-size:10px;color:#111;font-weight:normal;">Ctrl+M</div>
<svg style="position:absolute;left:207.5px;top:57.0px;overflow:visible" width="13" height="12" viewBox="0 0 13 12"><rect x="1" y="0.5" width="9" height="6" rx="1" fill="#fff" stroke="#777" stroke-width="1"/><rect x="1.5" y="3.5" width="10" height="7" rx="1" fill="#fff" stroke="#666" stroke-width="1"/><path d="M3 5.5 H10" stroke="#666" stroke-width="0.9"/><rect x="3" y="7" width="7" height="2.5" fill="#ddd"/></svg>
<div class="t" style="left:228.30px;top:57.53px;font-size:10px;color:#111;font-weight:normal;">Duplikuj <u>s</u>lajd</div>
<div class="t" style="left:228.30px;top:73.53px;font-size:10px;color:#111;font-weight:normal;"><u>W</u>staw slajd z pliku...</div>
<div class="t" style="left:228.30px;top:89.53px;font-size:10px;color:#111;font-weight:normal;">Ukła<u>d</u></div>
<svg style="position:absolute;left:502px;top:91.5px;overflow:visible" width="4" height="6" viewBox="0 0 4 6"><path d="M0 0 L3.5 3 L0 6Z" fill="#222"/></svg>
<svg style="position:absolute;left:207.5px;top:105.0px;overflow:visible" width="13" height="12" viewBox="0 0 13 12"><rect x="0.5" y="0.5" width="10.5" height="7" rx="0.8" fill="#fff" stroke="#666" stroke-width="1"/><path d="M2.5 2.3 H9.5" stroke="#666" stroke-width="0.8"/><path d="M6 5.5 L10 9.5 M10 5.5 L6 9.5" stroke="#e05a5a" stroke-width="0.9"/></svg>
<div class="t" style="left:228.30px;top:105.53px;font-size:10px;color:#111;font-weight:normal;">Usuń <u>s</u>lajd</div>
<div style="position:absolute;left:224px;top:120.1px;width:288px;height:1px;background:#dedede"></div>
<svg style="position:absolute;left:207.5px;top:126.333px;overflow:visible" width="13" height="12" viewBox="0 0 13 12"><path d="M1.5 0.5 H6.5 L8.5 2.5 V11.5 H1.5Z" fill="#cfe0f0" stroke="#5a6f88" stroke-width="1"/><rect x="5" y="6" width="6" height="5.5" fill="#b35bc8" stroke="#8a3aa0" stroke-width="0.6"/><rect x="6.5" y="6.5" width="3" height="1.8" fill="#fff"/><rect x="6.5" y="9.2" width="3" height="1.8" fill="#fff"/></svg>
<div class="t" style="left:228.30px;top:126.87px;font-size:10px;color:#111;font-weight:normal;"><u>Z</u>apisz obraz tła...</div>
<svg style="position:absolute;left:207.5px;top:142.333px;overflow:visible" width="13" height="12" viewBox="0 0 13 12"><path d="M2 0.5 H7 L9.5 3 V11.5 H2Z" fill="#a9d0ef" stroke="#4f6f90" stroke-width="1"/><path d="M7 0.5 V3 H9.5" fill="none" stroke="#4f6f90" stroke-width="0.8"/></svg>
<div class="t" style="left:228.30px;top:142.87px;font-size:10px;color:#111;font-weight:normal;">Ustaw obraz <u>t</u>ła...</div>
<svg style="position:absolute;left:207.5px;top:158.333px;overflow:visible" width="13" height="12" viewBox="0 0 13 12"><path d="M0.5 0.5 V9.5 H5" fill="none" stroke="#777" stroke-width="1"/><path d="M9 0.5 V3" stroke="#777" stroke-width="1"/><circle cx="8" cy="8" r="2.8" fill="#bfe0fb" stroke="#4a9ae0" stroke-width="1"/><circle cx="8" cy="8" r="0.9" fill="#fff"/></svg>
<div class="t" style="left:228.30px;top:158.87px;font-size:10px;color:#111;font-weight:normal;">Właściwości s<u>l</u>ajdu...</div>
<div style="position:absolute;left:224px;top:173.433px;width:288px;height:1px;background:#dedede"></div>
<svg style="position:absolute;left:207.5px;top:179.666px;overflow:visible" width="13" height="12" viewBox="0 0 13 12"><rect x="0.5" y="0.5" width="10.5" height="10" fill="#fff" stroke="#666" stroke-width="1"/><path d="M2 2.5 H9.5" stroke="#666" stroke-width="0.9"/><path d="M3 10 L9.5 3.5 L11 5 L4.5 11.5Z" fill="#7ab5e0" stroke="#3f6f9f" stroke-width="0.6"/></svg>
<div class="t" style="left:228.30px;top:180.20px;font-size:10px;color:#111;font-weight:normal;">Zmień wzorzec sla<u>j</u>du...</div>
<svg style="position:absolute;left:207.5px;top:195.666px;overflow:visible" width="13" height="12" viewBox="0 0 13 12"><rect x="0.5" y="1.5" width="10.5" height="9" fill="#3d7cc0" stroke="#2f5f9a" stroke-width="0.8"/><rect x="2" y="5" width="7.5" height="4" fill="#9ccff5"/><rect x="6" y="3" width="3.5" height="2" fill="#fff"/><circle cx="2.5" cy="2.5" r="2.3" fill="#f6b860"/></svg>
<div class="t" style="left:228.30px;top:196.20px;font-size:10px;color:#111;font-weight:normal;">Now<u>y</u> wzorzec</div>
<svg style="position:absolute;left:207.5px;top:211.666px;overflow:visible" width="13" height="12" viewBox="0 0 13 12"><rect x="0.5" y="0.5" width="10.5" height="9" fill="#3d7cc0" stroke="#2f5f9a" stroke-width="0.8"/><rect x="2" y="3" width="7.5" height="5" fill="#aed6f5"/><path d="M6 6 L10.5 10.5 M10.5 6 L6 10.5" stroke="#e05a5a" stroke-width="1"/></svg>
<div class="t" style="left:228.30px;top:212.20px;font-size:10px;color:#111;font-weight:normal;">Usuń wzorze<u>c</u></div>
<div style="position:absolute;left:224px;top:226.766px;width:288px;height:1px;background:#dedede"></div>
<svg style="position:absolute;left:207.5px;top:232.999px;overflow:visible" width="13" height="12" viewBox="0 0 13 12"><rect x="0" y="0" width="12.5" height="12" rx="1.5" fill="#cfe6fb"/><rect x="1.8" y="1.8" width="9" height="8.5" fill="#2a76c0" stroke="#2060a0" stroke-width="0.6"/></svg>
<div class="t" style="left:228.30px;top:233.53px;font-size:10px;color:#111;font-weight:normal;">Tło wzo<u>r</u>ca</div>
<svg style="position:absolute;left:207.5px;top:248.999px;overflow:visible" width="13" height="12" viewBox="0 0 13 12"><rect x="0" y="0" width="12.5" height="11.5" rx="1.5" fill="#cfe6fb"/><rect x="1.8" y="1.8" width="9" height="8" fill="#fff" stroke="#2f64a4" stroke-width="1.2"/><rect x="3.5" y="5.8" width="5.5" height="2.2" fill="#e04a55"/><rect x="2.4" y="2.5" width="7.8" height="2" fill="#8ec4ef"/></svg>
<div class="t" style="left:228.30px;top:249.53px;font-size:10px;color:#111;font-weight:normal;">O<u>b</u>iekty wzorca</div>
<svg style="position:absolute;left:207.5px;top:264.999px;overflow:visible" width="13" height="12" viewBox="0 0 13 12"><rect x="0.5" y="0.5" width="10.5" height="9" fill="#fff" stroke="#2f64a4" stroke-width="1.1"/><rect x="1.5" y="2.5" width="8.5" height="3" fill="#6fb2ea"/><path d="M11.5 4.5 V11 H5Z" fill="#eca24a"/></svg>
<div class="t" style="left:228.30px;top:265.53px;font-size:10px;color:#111;font-weight:normal;"><u>E</u>lementy wzorca...</div>
<div style="position:absolute;left:224px;top:280.09900000000005px;width:288px;height:1px;background:#dedede"></div>
<svg style="position:absolute;left:207.5px;top:286.33200000000005px;overflow:visible" width="13" height="12" viewBox="0 0 13 12"><rect x="0.5" y="0.5" width="10.5" height="8" fill="#e6e6e6" stroke="#c8c8c8" stroke-width="1"/><path d="M1 3.5 H10.5 M1 6 H10.5" stroke="#d0d0d0" stroke-width="0.8"/></svg>
<div class="t" style="left:228.30px;top:286.87px;font-size:10px;color:#a0a0a0;font-weight:normal;">Po<u>k</u>aż slajd</div>
<svg style="position:absolute;left:207.5px;top:302.33200000000005px;overflow:visible" width="13" height="12" viewBox="0 0 13 12"><rect x="0.5" y="0.5" width="10.5" height="7.5" fill="#fff" stroke="#555" stroke-width="1"/><path d="M1 8 L10.5 0.8" stroke="#555" stroke-width="1"/></svg>
<div class="t" style="left:228.30px;top:302.87px;font-size:10px;color:#111;font-weight:normal;"><u>U</u>kryj slajd</div>
<svg style="position:absolute;left:207.5px;top:318.33200000000005px;overflow:visible" width="13" height="12" viewBox="0 0 13 12"><path d="M7 0.5 H0.5 V8.5 H7" fill="none" stroke="#555" stroke-width="1"/><path d="M2 3 H6 M2 5.5 H5" stroke="#777" stroke-width="0.8"/><path d="M8 0.5 H11 M9.5 0.5 V9 M8 9 H11" stroke="#333" stroke-width="1.1"/><rect x="8.2" y="2" width="2.6" height="5.5" fill="#999" opacity="0.6"/></svg>
<div class="t" style="left:228.30px;top:318.87px;font-size:10px;color:#111;font-weight:normal;">Zm<u>i</u>eń nazwę slajdu...</div>
<div style="position:absolute;left:224px;top:333.4320000000001px;width:288px;height:1px;background:#dedede"></div>
<div class="t" style="left:228.30px;top:340.20px;font-size:10px;color:#111;font-weight:normal;"><u>P</u>rzeskocz do ostatnio edytowanego slajdu</div>
<div class="t" style="left:442.77px;top:340.20px;font-size:10px;color:#111;font-weight:normal;">Alt+Shift+F5</div>
<div class="t" style="left:228.30px;top:356.20px;font-size:10px;color:#111;font-weight:normal;">Przenieś</div>
<svg style="position:absolute;left:502px;top:358.1650000000001px;overflow:visible" width="4" height="6" viewBox="0 0 4 6"><path d="M0 0 L3.5 3 L0 6Z" fill="#222"/></svg>
<div class="t" style="left:228.30px;top:372.20px;font-size:10px;color:#111;font-weight:normal;">Nawig<u>u</u>j</div>
<svg style="position:absolute;left:502px;top:374.1650000000001px;overflow:visible" width="4" height="6" viewBox="0 0 4 6"><path d="M0 0 L3.5 3 L0 6Z" fill="#222"/></svg>
<div style="position:absolute;left:224px;top:386.7650000000001px;width:288px;height:1px;background:#dedede"></div>
<div class="t" style="left:228.30px;top:393.53px;font-size:10px;color:#a0a0a0;font-weight:normal;">Slajd podsu<u>m</u>owania</div>
<div class="t" style="left:228.30px;top:409.53px;font-size:10px;color:#a0a0a0;font-weight:normal;">R<u>o</u>zwiń slajd</div>
<svg style="position:absolute;left:207.5px;top:424.9980000000001px;overflow:visible" width="13" height="12" viewBox="0 0 13 12"><path d="M1 1 V9.5" stroke="#eab48a" stroke-width="1.3" stroke-dasharray="1.3 1"/><path d="M11 1 H3.5 V9.5 H11" fill="none" stroke="#555" stroke-width="1.1"/><path d="M5 3 H11" stroke="#4a88c8" stroke-width="1.5"/></svg>
<div class="t" style="left:228.30px;top:425.53px;font-size:10px;color:#111;font-weight:normal;">Przejście sl<u>a</u>jdu</div>
<div style="position:absolute;left:198px;top:15px;width:38px;height:145px;border:3px solid #ef1c1c;box-sizing:border-box"></div>
</body></html>
